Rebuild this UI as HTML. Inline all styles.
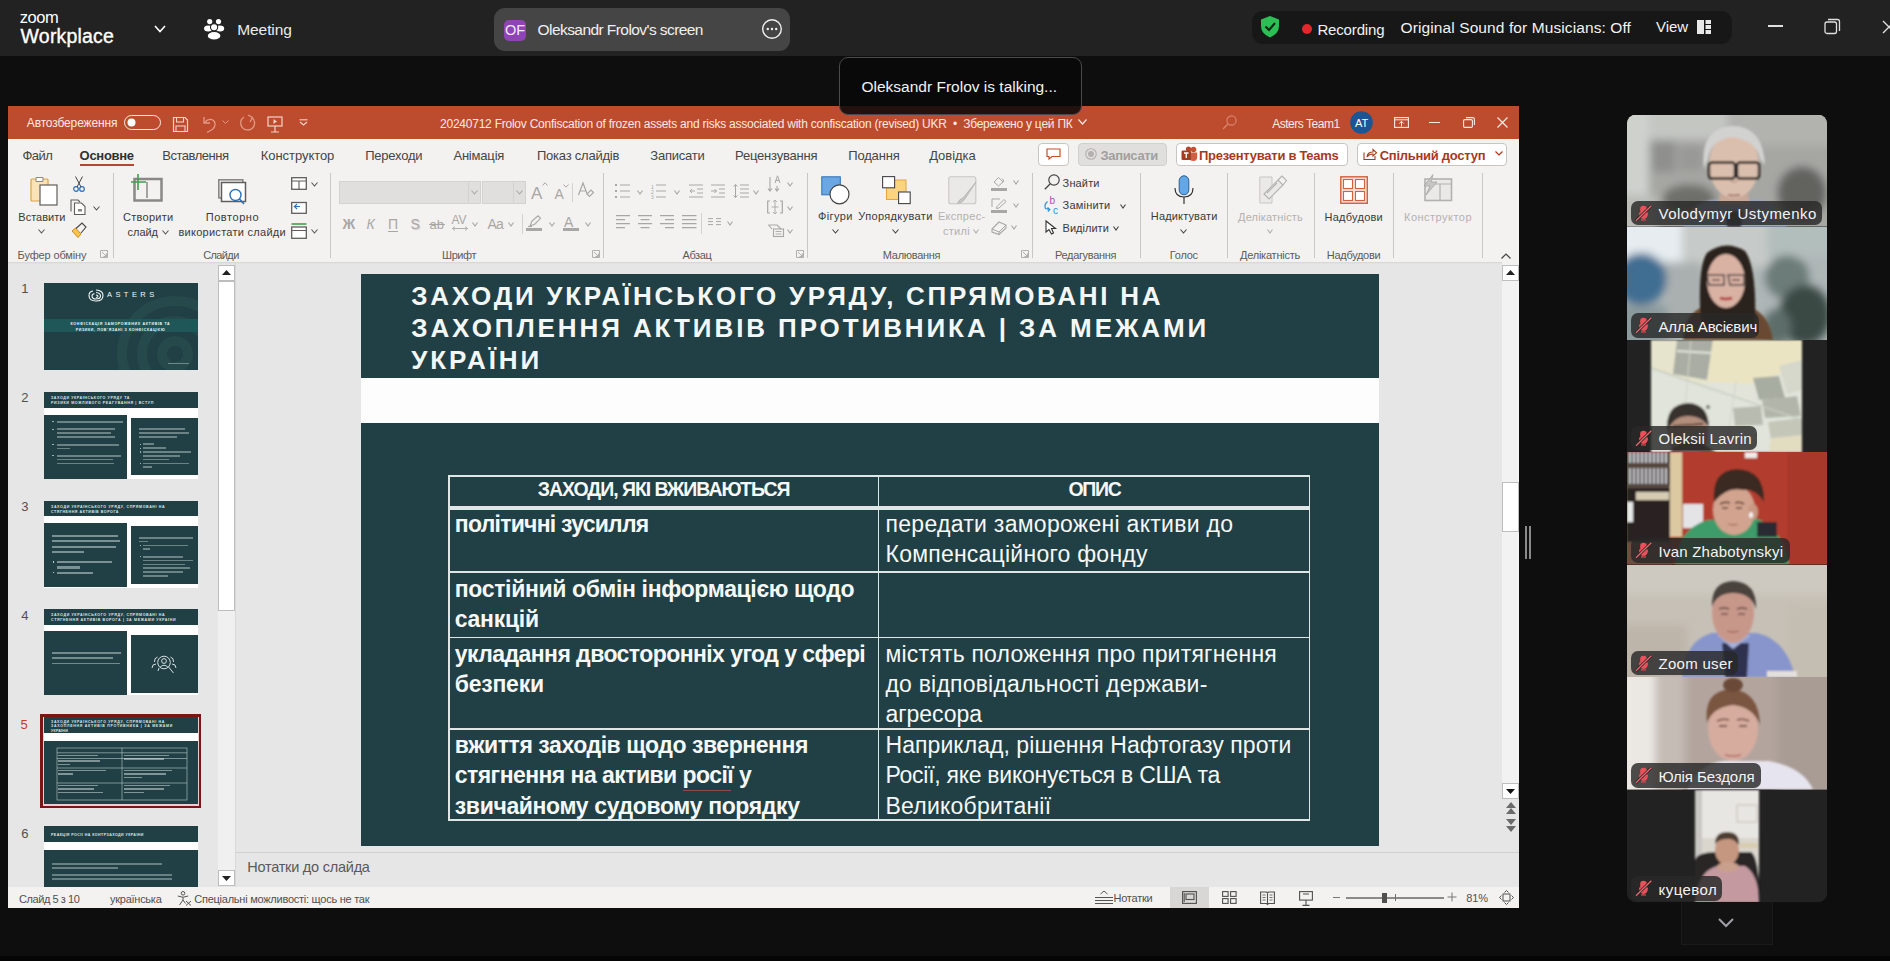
<!DOCTYPE html>
<html><head><meta charset="utf-8">
<style>
*{margin:0;padding:0;box-sizing:border-box}
html,body{width:1890px;height:961px;overflow:hidden;background:#0e0e0e;font-family:"Liberation Sans",sans-serif}
.a{position:absolute}
.t{position:absolute;white-space:nowrap;line-height:normal}
svg{overflow:visible}
</style></head>
<body>

<div class="a" style="left:0px;top:0px;width:1890px;height:56px;background:#222222;"></div>
<div class="t" style="left:19.8px;top:7.6px;font-size:16.5px;color:#fff;letter-spacing:-0.462px;">zoom</div>
<div class="t" style="left:20.6px;top:25.2px;font-size:19.5px;color:#fff;letter-spacing:0.193px;-webkit-text-stroke:0.35px #fff;">Workplace</div>
<svg class="a" style="left:154px;top:25px;" width="12" height="8" viewBox="0 0 12 8"><polyline points="1,1 6,6.5 11,1" fill="none" stroke="#fff" stroke-width="1.6"/></svg>
<svg class="a" style="left:204px;top:18px;" width="21" height="22" viewBox="0 0 21 22"><circle cx="5.7" cy="3.6" r="2.6" fill="#fff"/><circle cx="14.5" cy="3.6" r="2.6" fill="#fff"/><ellipse cx="4.2" cy="10.5" rx="4.2" ry="3" fill="#fff"/><ellipse cx="16" cy="10.5" rx="4.2" ry="3" fill="#fff"/><circle cx="10.1" cy="9.3" r="3.6" fill="#fff" stroke="#222" stroke-width="1.1"/><ellipse cx="10.1" cy="17.8" rx="6.9" ry="4.3" fill="#fff" stroke="#222" stroke-width="1.1"/></svg>
<div class="t" style="left:237.3px;top:20.8px;font-size:15.5px;color:#ececec;letter-spacing:-0.106px;">Meeting</div>
<div class="a" style="left:494px;top:8px;width:296px;height:43px;background:#454545;border-radius:11px;"></div>
<div class="a" style="left:504px;top:19.5px;width:22px;height:21px;background:#8f44b5;border-radius:5px;"></div>
<div class="t" style="left:504.9px;top:22.4px;font-size:14.5px;color:#f4e8fa;">OF</div>
<div class="t" style="left:537.6px;top:20.7px;font-size:15.5px;color:#f0f0f0;letter-spacing:-0.570px;">Oleksandr Frolov&#39;s screen</div>
<svg class="a" style="left:762px;top:19px;" width="20" height="20" viewBox="0 0 20 20"><circle cx="10" cy="10" r="9.3" fill="none" stroke="#f0f0f0" stroke-width="1.4"/><circle cx="5.8" cy="10" r="1.2" fill="#f0f0f0"/><circle cx="10" cy="10" r="1.2" fill="#f0f0f0"/><circle cx="14.2" cy="10" r="1.2" fill="#f0f0f0"/></svg>
<div class="a" style="left:1252px;top:11px;width:480px;height:33px;background:#171717;border-radius:11px;"></div>
<svg class="a" style="left:1259px;top:15px;" width="22" height="23" viewBox="0 0 22 23"><path d="M11,1 L20,4.5 L20,11 Q20,18.5 11,22.5 Q2,18.5 2,11 L2,4.5 Z" fill="#2bbf56"/><polyline points="6.5,11.5 10,15 16,8" fill="none" stroke="#0d2a14" stroke-width="2.2"/></svg>
<svg class="a" style="left:1302px;top:24px;" width="10" height="10" viewBox="0 0 10 10"><circle cx="5" cy="5" r="5" fill="#e3272b"/></svg>
<div class="t" style="left:1317.4px;top:20.8px;font-size:15px;color:#f2f2f2;letter-spacing:-0.153px;">Recording</div>
<div class="t" style="left:1400.6px;top:18.7px;font-size:15.5px;color:#f2f2f2;letter-spacing:0.098px;">Original Sound for Musicians: Off</div>
<div class="t" style="left:1656.0px;top:18.0px;font-size:15px;color:#f2f2f2;letter-spacing:-0.061px;">View</div>
<svg class="a" style="left:1697px;top:20px;" width="14" height="14" viewBox="0 0 14 14"><rect x="0" y="0" width="7" height="14" fill="#e8e8e8"/><rect x="8.5" y="0" width="5.5" height="4" fill="#e8e8e8"/><rect x="8.5" y="5" width="5.5" height="4" fill="#e8e8e8"/><rect x="8.5" y="10" width="5.5" height="4" fill="#e8e8e8"/></svg>
<div class="a" style="left:1768px;top:25px;width:15px;height:1.5px;background:#e0e0e0;"></div>
<svg class="a" style="left:1824px;top:18px;" width="17" height="17" viewBox="0 0 17 17"><rect x="1" y="4" width="11.5" height="11.5" rx="2" fill="none" stroke="#e0e0e0" stroke-width="1.3"/><path d="M4,1.5 L13.5,1.5 Q15.5,1.5 15.5,3.5 L15.5,13" fill="none" stroke="#e0e0e0" stroke-width="1.3"/></svg>
<svg class="a" style="left:1882px;top:20px;" width="12" height="14" viewBox="0 0 12 14"><path d="M1,1 L13,13 M13,1 L1,13" stroke="#e0e0e0" stroke-width="1.4"/></svg>
<div class="a" style="left:8px;top:106px;width:1511px;height:802px;background:#f3f2f1;"></div>
<div class="a" style="left:8px;top:106px;width:1511px;height:33px;background:#bd4b2d;"></div>
<div class="t" style="left:26.8px;top:116.1px;font-size:12px;color:#fbe9e3;letter-spacing:-0.140px;">Автозбереження</div>
<div class="a" style="left:123.5px;top:114.5px;width:37px;height:15.5px;background:transparent;border:1.3px solid #fbe9e3;border-radius:8px;"></div>
<svg class="a" style="left:127px;top:118px;" width="9" height="9" viewBox="0 0 9 9"><circle cx="4.5" cy="4.5" r="4" fill="#fff"/></svg>
<svg class="a" style="left:172px;top:115.5px;" width="17" height="17" viewBox="0 0 17 17"><path d="M1.5,1.5 H13 L15.5,4 V15.5 H1.5 Z" fill="none" stroke="#f3d2c8" stroke-width="1.2"/><rect x="4.5" y="1.5" width="7" height="4.5" fill="none" stroke="#f3d2c8" stroke-width="1.1"/><rect x="4" y="10" width="9" height="5.5" fill="none" stroke="#f3d2c8" stroke-width="1.1"/></svg>
<svg class="a" style="left:201px;top:115px;" width="16" height="18" viewBox="0 0 16 18"><path d="M3,2 V8 H9" fill="none" stroke="#e29a86" stroke-width="1.3"/><path d="M3.5,7.5 Q8,2.5 12.5,5.5 Q16,9 12,14 L6,17.5" fill="none" stroke="#e29a86" stroke-width="1.3"/></svg>
<svg class="a" style="left:222px;top:120px;" width="7" height="5" viewBox="0 0 7 5"><polyline points="0.5,0.5 3.5,3.5 6.5,0.5" fill="none" stroke="#e29a86" stroke-width="1"/></svg>
<svg class="a" style="left:239px;top:114px;" width="17" height="18" viewBox="0 0 17 18"><path d="M13,3.5 A7,7 0 1 1 5,3" fill="none" stroke="#e29a86" stroke-width="1.3"/><path d="M9,1 L13.5,3.5 L11,8" fill="none" stroke="#e29a86" stroke-width="1.3"/></svg>
<svg class="a" style="left:267px;top:115.5px;" width="16" height="17" viewBox="0 0 16 17"><rect x="1" y="1" width="14" height="9" fill="none" stroke="#f3d2c8" stroke-width="1.2"/><path d="M6.5,3 L10,5.5 L6.5,8 Z" fill="#f3d2c8"/><path d="M8,10 V15.5 M4,16 H12" stroke="#f3d2c8" stroke-width="1.2"/></svg>
<svg class="a" style="left:299px;top:119px;" width="9" height="7" viewBox="0 0 9 7"><path d="M0.5,0.8 H8.5" stroke="#f3d2c8" stroke-width="1.1"/><polyline points="1,3 4.5,6 8,3" fill="none" stroke="#f3d2c8" stroke-width="1.2"/></svg>
<div class="t" style="left:440.0px;top:116.9px;font-size:12px;color:#fbe9e3;letter-spacing:-0.233px;">20240712 Frolov Confiscation of frozen assets and risks associated with confiscation (revised) UKR&nbsp;&nbsp;•&nbsp;&nbsp;Збережено у цей ПК</div>
<svg class="a" style="left:1077.5px;top:119px;" width="9" height="6" viewBox="0 0 9 6"><polyline points="0.5,0.5 4.5,5 8.5,0.5" fill="none" stroke="#fbe9e3" stroke-width="1.2"/></svg>
<svg class="a" style="left:1222px;top:115px;" width="15" height="15" viewBox="0 0 15 15"><circle cx="9.5" cy="5.5" r="4.6" fill="none" stroke="#d8836c" stroke-width="1.2"/><path d="M6.2,8.8 L1,14" stroke="#d8836c" stroke-width="1.3"/></svg>
<div class="t" style="left:1272.2px;top:116.8px;font-size:12px;color:#fbe9e3;letter-spacing:-0.470px;">Asters Team1</div>
<svg class="a" style="left:1350px;top:111px;" width="23" height="23" viewBox="0 0 23 23"><circle cx="11.5" cy="11.5" r="11.3" fill="#1b5594"/></svg>
<div class="t" style="left:1355.0px;top:117.0px;font-size:11px;color:#fff;">AT</div>
<svg class="a" style="left:1394px;top:117px;" width="15" height="11" viewBox="0 0 15 11"><rect x="0.6" y="0.6" width="13.8" height="9.8" fill="none" stroke="#fbe9e3" stroke-width="1.1"/><path d="M0.6,2.8 H14.4" stroke="#fbe9e3" stroke-width="1"/><path d="M7.5,9.5 V4.5 M5.2,6.6 L7.5,4.3 L9.8,6.6" fill="none" stroke="#fbe9e3" stroke-width="1"/></svg>
<div class="a" style="left:1429px;top:121.5px;width:11px;height:1.3px;background:#fbe9e3;"></div>
<svg class="a" style="left:1463px;top:117px;" width="12" height="11" viewBox="0 0 12 11"><rect x="0.6" y="2.6" width="8.8" height="7.8" rx="1.2" fill="none" stroke="#fbe9e3" stroke-width="1.1"/><path d="M3,0.6 H9.8 Q11.4,0.6 11.4,2.2 V8" fill="none" stroke="#fbe9e3" stroke-width="1.1"/></svg>
<svg class="a" style="left:1496.5px;top:117px;" width="11" height="11" viewBox="0 0 11 11"><path d="M0.5,0.5 L10.5,10.5 M10.5,0.5 L0.5,10.5" stroke="#fbe9e3" stroke-width="1.2"/></svg>
<div class="t" style="left:22.5px;top:148.3px;font-size:13px;color:#454545;letter-spacing:-0.565px;">Файл</div>
<div class="t" style="left:79.6px;top:148.3px;font-size:13px;color:#303030;font-weight:700;letter-spacing:-0.287px;">Основне</div>
<div class="t" style="left:162.2px;top:148.3px;font-size:13px;color:#454545;letter-spacing:-0.463px;">Вставлення</div>
<div class="t" style="left:260.8px;top:148.3px;font-size:13px;color:#454545;letter-spacing:-0.057px;">Конструктор</div>
<div class="t" style="left:365.2px;top:148.3px;font-size:13px;color:#454545;letter-spacing:-0.224px;">Переходи</div>
<div class="t" style="left:453.4px;top:148.3px;font-size:13px;color:#454545;letter-spacing:-0.185px;">Анімація</div>
<div class="t" style="left:537.0px;top:148.3px;font-size:13px;color:#454545;letter-spacing:-0.228px;">Показ слайдів</div>
<div class="t" style="left:650.3px;top:148.3px;font-size:13px;color:#454545;letter-spacing:-0.243px;">Записати</div>
<div class="t" style="left:735.0px;top:148.3px;font-size:13px;color:#454545;letter-spacing:-0.195px;">Рецензування</div>
<div class="t" style="left:848.3px;top:148.3px;font-size:13px;color:#454545;letter-spacing:-0.186px;">Подання</div>
<div class="t" style="left:929.2px;top:148.3px;font-size:13px;color:#454545;letter-spacing:-0.038px;">Довідка</div>
<div class="a" style="left:79.6px;top:163.8px;width:54.3px;height:2.6px;background:#b7472a;"></div>
<div class="a" style="left:1038px;top:142.5px;width:31px;height:23px;background:#fff;border:1px solid #c8c6c4;border-radius:4px;"></div>
<svg class="a" style="left:1046px;top:148px;" width="15" height="12" viewBox="0 0 15 12"><path d="M1,1 H14 V8.5 H6 L3,11 V8.5 H1 Z" fill="none" stroke="#c4502f" stroke-width="1.2"/></svg>
<div class="a" style="left:1077.5px;top:142.5px;width:89px;height:23px;background:#e1dfdd;border:1px solid #d2d0ce;border-radius:4px;"></div>
<svg class="a" style="left:1085px;top:148px;" width="12" height="12" viewBox="0 0 12 12"><circle cx="6" cy="6" r="5.3" fill="none" stroke="#b3b0ad" stroke-width="1.1"/><circle cx="6" cy="6" r="3" fill="#b3b0ad"/></svg>
<div class="t" style="left:1100.5px;top:147.7px;font-size:13px;color:#a19f9d;font-weight:700;letter-spacing:-0.337px;">Записати</div>
<div class="a" style="left:1175.5px;top:142.5px;width:172px;height:23px;background:#fff;border:1px solid #c8c6c4;border-radius:4px;"></div>
<svg class="a" style="left:1181px;top:146px;" width="17" height="16" viewBox="0 0 17 16"><circle cx="12.5" cy="3.5" r="2.8" fill="#c4502f"/><path d="M8,6.5 H16.2 V11 Q16.2,15 12.5,15 Q8,15 8,11 Z" fill="#d0603e"/><circle cx="7.5" cy="3" r="2.6" fill="#b8462a"/><rect x="0.5" y="4.5" width="9.5" height="9.5" rx="1.2" fill="#a83c22"/><path d="M3,7 H7.5 M5.25,7 V12" stroke="#fff" stroke-width="1.3"/></svg>
<div class="t" style="left:1199.0px;top:147.7px;font-size:13px;color:#a8391f;font-weight:700;letter-spacing:-0.258px;">Презентувати в Teams</div>
<div class="a" style="left:1356.5px;top:142.5px;width:150px;height:23px;background:#fff;border:1px solid #c8c6c4;border-radius:4px;"></div>
<svg class="a" style="left:1363px;top:148px;" width="14" height="12" viewBox="0 0 14 12"><path d="M1,4.5 V11.5 H12 V8" fill="none" stroke="#a8391f" stroke-width="1.1"/><path d="M4,9 Q4.5,4 10,4 V1.5 L13.5,4.8 L10,8 V6 Q6,6 4,9 Z" fill="none" stroke="#a8391f" stroke-width="1.1"/></svg>
<div class="t" style="left:1379.7px;top:147.7px;font-size:13px;color:#a8391f;font-weight:700;letter-spacing:-0.265px;">Спільний доступ</div>
<svg class="a" style="left:1495px;top:151px;" width="8" height="5" viewBox="0 0 8 5"><polyline points="0.5,0.5 4,4 7.5,0.5" fill="none" stroke="#a8391f" stroke-width="1.2"/></svg>
<svg class="a" style="left:30px;top:175px;" width="28" height="31" viewBox="0 0 28 31"><rect x="1" y="4" width="17" height="22" rx="1" fill="#fbe3b8" stroke="#e2a23c" stroke-width="1.2"/><path d="M6,2.5 H13 V6.5 H6 Z" fill="#fff" stroke="#8a8886" stroke-width="1"/><rect x="10" y="10" width="17" height="20" fill="#fff" stroke="#605e5c" stroke-width="1.2"/></svg>
<div class="t" style="left:18.3px;top:210.5px;font-size:11px;color:#3b3a39;">Вставити</div>
<svg class="a" style="left:38.0px;top:228.8px;" width="7" height="5" viewBox="0 0 7 5"><polyline points="0.5,0.5 3.5,4 6.5,0.5" fill="none" stroke="#555" stroke-width="1.1"/></svg>
<svg class="a" style="left:73px;top:176px;" width="12" height="16" viewBox="0 0 12 16"><circle cx="3" cy="13" r="2.3" fill="none" stroke="#2f6fb5" stroke-width="1.2"/><circle cx="9" cy="13" r="2.3" fill="none" stroke="#2f6fb5" stroke-width="1.2"/><path d="M4,11 L9.5,0.5 M8,11 L2.5,0.5" stroke="#444" stroke-width="1"/></svg>
<svg class="a" style="left:70px;top:199px;" width="17" height="16" viewBox="0 0 17 16"><path d="M1,12.5 V1 H8 L10,3" fill="none" stroke="#605e5c" stroke-width="1.1"/><path d="M4.5,4 H11.5 L15,7.5 V15.5 H4.5 Z" fill="#fff" stroke="#605e5c" stroke-width="1.1"/><rect x="8" y="10" width="4" height="2.5" fill="#8a8886"/></svg>
<svg class="a" style="left:92.5px;top:205.8px;" width="7" height="5" viewBox="0 0 7 5"><polyline points="0.5,0.5 3.5,4 6.5,0.5" fill="none" stroke="#555" stroke-width="1.1"/></svg>
<svg class="a" style="left:70px;top:222px;" width="17" height="16" viewBox="0 0 17 16"><path d="M2,9 L8,15.5 L11,12 L5.5,6 Z" fill="#f6c44a" stroke="#d48a1a" stroke-width="1"/><path d="M6,6.5 L12,1 L16,5 L11,11" fill="none" stroke="#444" stroke-width="1.1"/></svg>
<svg class="a" style="left:100px;top:250px;" width="8" height="8" viewBox="0 0 8 8"><path d="M0.5,0.5 H7.5 V7.5 H0.5 Z" fill="none" stroke="#aaa8a6" stroke-width="0.9"/><path d="M2,2 L6.5,6.5 M6.5,3.5 V6.5 H3.5" fill="none" stroke="#aaa8a6" stroke-width="0.9"/></svg>
<div class="t" style="left:17.6px;top:249.0px;font-size:11px;color:#5c5b5a;letter-spacing:-0.138px;">Буфер обміну</div>
<div class="a" style="left:112.5px;top:173px;width:1px;height:85px;background:#c9c7c5;"></div>
<svg class="a" style="left:131px;top:174px;" width="32" height="28" viewBox="0 0 32 28"><rect x="3.5" y="5" width="27" height="21.5" fill="none" stroke="#8a8886" stroke-width="2.5"/><path d="M16,8 V24" stroke="#8a8886" stroke-width="1.5"/><path d="M7,0 V16 M0,8 H15" stroke="#3fa04b" stroke-width="1.6"/></svg>
<div class="t" style="left:123.0px;top:210.5px;font-size:11px;color:#3b3a39;letter-spacing:0.279px;">Створити</div>
<div class="t" style="left:127.5px;top:226.2px;font-size:11px;color:#3b3a39;letter-spacing:-0.020px;">слайд</div>
<svg class="a" style="left:162.0px;top:229.8px;" width="7" height="5" viewBox="0 0 7 5"><polyline points="0.5,0.5 3.5,4 6.5,0.5" fill="none" stroke="#555" stroke-width="1.1"/></svg>
<svg class="a" style="left:218px;top:179px;" width="32" height="28" viewBox="0 0 32 28"><rect x="0.8" y="0.8" width="24" height="18" fill="none" stroke="#8a8886" stroke-width="1.6"/><rect x="3.5" y="3.5" width="24" height="19" fill="#fff" stroke="#605e5c" stroke-width="1.5"/><circle cx="17.5" cy="16" r="5.5" fill="#fff" stroke="#2f6fb5" stroke-width="1.4"/><path d="M21.5,20 L26,25" stroke="#2f6fb5" stroke-width="1.6"/></svg>
<div class="t" style="left:205.7px;top:210.5px;font-size:11px;color:#3b3a39;letter-spacing:0.566px;">Повторно</div>
<div class="t" style="left:178.4px;top:226.2px;font-size:11px;color:#3b3a39;letter-spacing:0.279px;">використати слайди</div>
<svg class="a" style="left:290.5px;top:177px;" width="16" height="13" viewBox="0 0 16 13"><rect x="0.7" y="0.7" width="14.6" height="11.6" fill="#fff" stroke="#605e5c" stroke-width="1.3"/><path d="M0.7,4 H15.3 M8,4 V12.3" stroke="#605e5c" stroke-width="1.1"/></svg>
<svg class="a" style="left:310.5px;top:181.8px;" width="7" height="5" viewBox="0 0 7 5"><polyline points="0.5,0.5 3.5,4 6.5,0.5" fill="none" stroke="#555" stroke-width="1.1"/></svg>
<svg class="a" style="left:290.5px;top:199.5px;" width="16" height="14" viewBox="0 0 16 14"><rect x="0.7" y="2.5" width="14.6" height="10.8" fill="#fff" stroke="#605e5c" stroke-width="1.3"/><path d="M9,6.5 H3.5 L6,4 M3.5,6.5 L6,9" fill="none" stroke="#2f6fb5" stroke-width="1.1"/></svg>
<svg class="a" style="left:290.5px;top:223px;" width="16" height="16" viewBox="0 0 16 16"><path d="M0.5,1 H15.5" stroke="#3fa04b" stroke-width="1.6"/><rect x="0.7" y="4" width="14.6" height="11.3" fill="#fff" stroke="#605e5c" stroke-width="1.3"/><path d="M0.7,7.5 H15.3" stroke="#605e5c" stroke-width="1"/></svg>
<svg class="a" style="left:310.5px;top:228.8px;" width="7" height="5" viewBox="0 0 7 5"><polyline points="0.5,0.5 3.5,4 6.5,0.5" fill="none" stroke="#555" stroke-width="1.1"/></svg>
<div class="t" style="left:203.2px;top:249.0px;font-size:11px;color:#5c5b5a;letter-spacing:-0.615px;">Слайди</div>
<div class="a" style="left:330.3px;top:173px;width:1px;height:85px;background:#c9c7c5;"></div>
<div class="a" style="left:339px;top:181px;width:141.5px;height:23px;background:#e1dfdd;border:1px solid #d4d2d0;"></div>
<div class="a" style="left:468.2px;top:181px;width:1px;height:23px;background:#d4d2d0;"></div>
<svg class="a" style="left:470.7px;top:189.8px;" width="7" height="5" viewBox="0 0 7 5"><polyline points="0.5,0.5 3.5,4 6.5,0.5" fill="none" stroke="#a9a7a5" stroke-width="1.1"/></svg>
<div class="a" style="left:482px;top:181px;width:44px;height:23px;background:#e1dfdd;border:1px solid #d4d2d0;"></div>
<div class="a" style="left:513.2px;top:181px;width:1px;height:23px;background:#d4d2d0;"></div>
<svg class="a" style="left:516.0px;top:189.8px;" width="7" height="5" viewBox="0 0 7 5"><polyline points="0.5,0.5 3.5,4 6.5,0.5" fill="none" stroke="#a9a7a5" stroke-width="1.1"/></svg>
<div class="t" style="left:531.0px;top:183.6px;font-size:17px;color:#a9a7a5;">A</div>
<svg class="a" style="left:542px;top:182px;" width="6" height="4" viewBox="0 0 6 4"><polyline points="0.5,3.5 3,0.8 5.5,3.5" fill="none" stroke="#a9a7a5" stroke-width="1"/></svg>
<div class="t" style="left:554.5px;top:185.8px;font-size:14px;color:#a9a7a5;">A</div>
<svg class="a" style="left:563px;top:184px;" width="6" height="4" viewBox="0 0 6 4"><polyline points="0.5,0.5 3,3.2 5.5,0.5" fill="none" stroke="#a9a7a5" stroke-width="1"/></svg>
<div class="a" style="left:572.4px;top:183px;width:1px;height:19px;background:#d4d2d0;"></div>
<svg class="a" style="left:578px;top:182px;" width="16" height="16" viewBox="0 0 16 16"><path d="M0.5,13 L5,1 L9.5,13 M2,9 H8" fill="none" stroke="#a9a7a5" stroke-width="1.2"/><path d="M9,12 L13,8 L15.5,10.5 L11.5,14.5 Z" fill="none" stroke="#a9a7a5" stroke-width="1.1"/></svg>
<div class="t" style="left:342.5px;top:215.8px;font-size:14px;color:#a9a7a5;font-weight:700;">Ж</div>
<div class="t" style="left:366.5px;top:215.8px;font-size:14px;color:#a9a7a5;font-style:italic;">К</div>
<div class="t" style="left:388.0px;top:215.8px;font-size:14px;color:#a9a7a5;">П</div>
<div class="a" style="left:388px;top:231px;width:10px;height:1.2px;background:#a9a7a5;"></div>
<div class="t" style="left:410.5px;top:215.8px;font-size:14px;color:#a9a7a5;text-shadow:1px 1px 1px #d0cecc;">S</div>
<div class="t" style="left:429.5px;top:216.7px;font-size:13px;color:#a9a7a5;">ab</div>
<div class="a" style="left:429px;top:223.5px;width:16px;height:1.2px;background:#a9a7a5;"></div>
<div class="t" style="left:451.5px;top:212.6px;font-size:12px;color:#a9a7a5;">AV</div>
<svg class="a" style="left:452px;top:226px;" width="16" height="5" viewBox="0 0 16 5"><path d="M0.5,2.5 H15.5 M3,0.5 L0.5,2.5 L3,4.5 M13,0.5 L15.5,2.5 L13,4.5" fill="none" stroke="#a9a7a5" stroke-width="0.9"/></svg>
<svg class="a" style="left:471.8px;top:221.8px;" width="6" height="5" viewBox="0 0 6 5"><polyline points="0.5,0.5 3.0,4 5.5,0.5" fill="none" stroke="#a9a7a5" stroke-width="1.1"/></svg>
<div class="t" style="left:487.5px;top:215.8px;font-size:14px;color:#a9a7a5;letter-spacing:-0.812px;">Aa</div>
<svg class="a" style="left:507.5px;top:221.8px;" width="6" height="5" viewBox="0 0 6 5"><polyline points="0.5,0.5 3.0,4 5.5,0.5" fill="none" stroke="#a9a7a5" stroke-width="1.1"/></svg>
<div class="a" style="left:521.6px;top:214px;width:1px;height:20px;background:#d4d2d0;"></div>
<svg class="a" style="left:526px;top:215px;" width="16" height="14" viewBox="0 0 16 14"><path d="M4,11 L6,6 L12,0.8 L14.5,3.3 L9,9 Z M2,11.5 H6" fill="none" stroke="#a9a7a5" stroke-width="1.1"/></svg>
<div class="a" style="left:526px;top:228px;width:16px;height:3px;background:#a9a7a5;"></div>
<svg class="a" style="left:548.7px;top:221.8px;" width="6" height="5" viewBox="0 0 6 5"><polyline points="0.5,0.5 3.0,4 5.5,0.5" fill="none" stroke="#a9a7a5" stroke-width="1.1"/></svg>
<div class="t" style="left:564.0px;top:213.8px;font-size:14px;color:#a9a7a5;">A</div>
<div class="a" style="left:563px;top:228px;width:16px;height:3px;background:#a9a7a5;"></div>
<svg class="a" style="left:585.0px;top:221.8px;" width="6" height="5" viewBox="0 0 6 5"><polyline points="0.5,0.5 3.0,4 5.5,0.5" fill="none" stroke="#a9a7a5" stroke-width="1.1"/></svg>
<svg class="a" style="left:592px;top:250px;" width="8" height="8" viewBox="0 0 8 8"><path d="M0.5,0.5 H7.5 V7.5 H0.5 Z" fill="none" stroke="#aaa8a6" stroke-width="0.9"/><path d="M2,2 L6.5,6.5 M6.5,3.5 V6.5 H3.5" fill="none" stroke="#aaa8a6" stroke-width="0.9"/></svg>
<div class="t" style="left:442.0px;top:249.0px;font-size:11px;color:#5c5b5a;letter-spacing:-0.438px;">Шрифт</div>
<div class="a" style="left:603.3px;top:173px;width:1px;height:85px;background:#c9c7c5;"></div>
<svg class="a" style="left:614.5px;top:184px;" width="16" height="14" viewBox="0 0 16 14"><rect x="0" y="0" width="2" height="2" fill="#a9a7a5"/><rect x="0" y="6" width="2" height="2" fill="#a9a7a5"/><rect x="0" y="12" width="2" height="2" fill="#a9a7a5"/><path d="M5,1 H15 M5,7 H15 M5,13 H15" stroke="#a9a7a5" stroke-width="1.2"/></svg>
<svg class="a" style="left:637.0px;top:189.8px;" width="6" height="5" viewBox="0 0 6 5"><polyline points="0.5,0.5 3.0,4 5.5,0.5" fill="none" stroke="#a9a7a5" stroke-width="1.1"/></svg>
<svg class="a" style="left:651px;top:184px;" width="16" height="15" viewBox="0 0 16 15"><text x="0" y="4.5" font-size="5" fill="#a9a7a5" font-family="Liberation Sans">1</text><text x="0" y="9.5" font-size="5" fill="#a9a7a5" font-family="Liberation Sans">2</text><text x="0" y="14.5" font-size="5" fill="#a9a7a5" font-family="Liberation Sans">3</text><path d="M5,1 H15 M5,7 H15 M5,13 H15" stroke="#a9a7a5" stroke-width="1.2"/></svg>
<svg class="a" style="left:674.0px;top:189.8px;" width="6" height="5" viewBox="0 0 6 5"><polyline points="0.5,0.5 3.0,4 5.5,0.5" fill="none" stroke="#a9a7a5" stroke-width="1.1"/></svg>
<svg class="a" style="left:689px;top:184px;" width="15" height="14" viewBox="0 0 15 14"><path d="M0,1 H14 M8,5 H14 M8,9 H14 M0,13 H14" stroke="#a9a7a5" stroke-width="1.2"/><path d="M6,7 H1 M3,5 L1,7 L3,9" fill="none" stroke="#a9a7a5" stroke-width="1"/></svg>
<svg class="a" style="left:711px;top:184px;" width="15" height="14" viewBox="0 0 15 14"><path d="M0,1 H14 M8,5 H14 M8,9 H14 M0,13 H14" stroke="#a9a7a5" stroke-width="1.2"/><path d="M0,7 H5.5 M3.5,5 L5.5,7 L3.5,9" fill="none" stroke="#a9a7a5" stroke-width="1"/></svg>
<svg class="a" style="left:732.5px;top:184px;" width="17" height="14" viewBox="0 0 17 14"><path d="M7,1 H16 M7,5 H16 M7,9 H16 M7,13 H16" stroke="#a9a7a5" stroke-width="1.2"/><path d="M2.5,0.5 V13.5 M0.5,2.5 L2.5,0.5 L4.5,2.5 M0.5,11.5 L2.5,13.5 L4.5,11.5" fill="none" stroke="#a9a7a5" stroke-width="1"/></svg>
<svg class="a" style="left:753.0px;top:189.8px;" width="6" height="5" viewBox="0 0 6 5"><polyline points="0.5,0.5 3.0,4 5.5,0.5" fill="none" stroke="#a9a7a5" stroke-width="1.1"/></svg>
<svg class="a" style="left:768px;top:175px;" width="15" height="18" viewBox="0 0 15 18"><path d="M2,2 V16 M0,13.5 L2,16 L4,13.5 M9,11 V16 M7,13.5 L9,16 L11,13.5" fill="none" stroke="#a9a7a5" stroke-width="1.1"/><path d="M7,8 L9.5,0.8 L12,8 M7.8,5.5 H11.2" fill="none" stroke="#a9a7a5" stroke-width="1"/></svg>
<svg class="a" style="left:787.3px;top:181.8px;" width="6" height="5" viewBox="0 0 6 5"><polyline points="0.5,0.5 3.0,4 5.5,0.5" fill="none" stroke="#a9a7a5" stroke-width="1.1"/></svg>
<svg class="a" style="left:767px;top:200px;" width="16" height="15" viewBox="0 0 16 15"><path d="M3,1 H0.7 V13 H3 M13,1 H15.3 V13 H13" fill="none" stroke="#a9a7a5" stroke-width="1.2"/><path d="M8,0 V14 M6,2 L8,0 L10,2 M6,12 L8,14 L10,12 M4.5,7 H11.5" fill="none" stroke="#a9a7a5" stroke-width="0.9"/></svg>
<svg class="a" style="left:787.3px;top:205.8px;" width="6" height="5" viewBox="0 0 6 5"><polyline points="0.5,0.5 3.0,4 5.5,0.5" fill="none" stroke="#a9a7a5" stroke-width="1.1"/></svg>
<svg class="a" style="left:767.5px;top:224px;" width="16" height="13" viewBox="0 0 16 13"><path d="M0.5,1 H9 L13,5" fill="none" stroke="#a9a7a5" stroke-width="1.1"/><path d="M0.5,1 L4,5" stroke="#a9a7a5" stroke-width="1.1"/><rect x="5.5" y="5" width="10" height="7.5" fill="none" stroke="#a9a7a5" stroke-width="1.1"/><path d="M7.5,7.5 H13.5 M7.5,10 H13.5" stroke="#a9a7a5" stroke-width="0.9"/></svg>
<svg class="a" style="left:787.3px;top:228.8px;" width="6" height="5" viewBox="0 0 6 5"><polyline points="0.5,0.5 3.0,4 5.5,0.5" fill="none" stroke="#a9a7a5" stroke-width="1.1"/></svg>
<svg class="a" style="left:615.5px;top:215px;" width="14" height="13" viewBox="0 0 14 13"><path d="M0,0.6 H14 M0,4.6 H9 M0,8.6 H14 M0,12.6 H9" stroke="#a9a7a5" stroke-width="1.2"/></svg>
<svg class="a" style="left:637.8px;top:215px;" width="14" height="13" viewBox="0 0 14 13"><path d="M0,0.6 H14 M2.5,4.6 H11.5 M0,8.6 H14 M2.5,12.6 H11.5" stroke="#a9a7a5" stroke-width="1.2"/></svg>
<svg class="a" style="left:660px;top:215px;" width="14" height="13" viewBox="0 0 14 13"><path d="M0,0.6 H14 M5,4.6 H14 M0,8.6 H14 M5,12.6 H14" stroke="#a9a7a5" stroke-width="1.2"/></svg>
<svg class="a" style="left:681.5px;top:215px;" width="14.5" height="13" viewBox="0 0 14.5 13"><path d="M0,0.6 H14.5 M0,4.6 H14.5 M0,8.6 H14.5 M0,12.6 H14.5" stroke="#a9a7a5" stroke-width="1.2"/></svg>
<div class="a" style="left:701.3px;top:213px;width:1px;height:21px;background:#d4d2d0;"></div>
<svg class="a" style="left:708px;top:218px;" width="13" height="8" viewBox="0 0 13 8"><path d="M0,0.6 H5 M8,0.6 H13 M0,3.6 H5 M8,3.6 H13 M0,6.6 H5 M8,6.6 H13" stroke="#a9a7a5" stroke-width="1"/></svg>
<svg class="a" style="left:726.8px;top:220.8px;" width="6" height="5" viewBox="0 0 6 5"><polyline points="0.5,0.5 3.0,4 5.5,0.5" fill="none" stroke="#a9a7a5" stroke-width="1.1"/></svg>
<svg class="a" style="left:795.6px;top:250px;" width="8" height="8" viewBox="0 0 8 8"><path d="M0.5,0.5 H7.5 V7.5 H0.5 Z" fill="none" stroke="#aaa8a6" stroke-width="0.9"/><path d="M2,2 L6.5,6.5 M6.5,3.5 V6.5 H3.5" fill="none" stroke="#aaa8a6" stroke-width="0.9"/></svg>
<div class="t" style="left:682.4px;top:249.0px;font-size:11px;color:#5c5b5a;letter-spacing:-0.332px;">Абзац</div>
<div class="a" style="left:806.5px;top:173px;width:1px;height:85px;background:#c9c7c5;"></div>
<svg class="a" style="left:821px;top:176px;" width="32" height="34" viewBox="0 0 32 34"><rect x="0.8" y="0.8" width="18.5" height="18" fill="#6aa7e3" stroke="#2f6fb5" stroke-width="1"/><circle cx="18.5" cy="18.3" r="9.5" fill="#fff" stroke="#444" stroke-width="1.2"/></svg>
<div class="t" style="left:818.0px;top:210.0px;font-size:11px;color:#3b3a39;letter-spacing:0.374px;">Фігури</div>
<svg class="a" style="left:831.5px;top:228.8px;" width="7" height="5" viewBox="0 0 7 5"><polyline points="0.5,0.5 3.5,4 6.5,0.5" fill="none" stroke="#444" stroke-width="1.1"/></svg>
<svg class="a" style="left:881.5px;top:176px;" width="30" height="29" viewBox="0 0 30 29"><rect x="4.5" y="4" width="19.5" height="19.5" fill="#fcd37f" stroke="#e8a33b" stroke-width="1"/><rect x="0.6" y="0.6" width="12" height="11.2" fill="#fff" stroke="#444" stroke-width="1.1"/><rect x="16.6" y="16" width="11.6" height="11.6" fill="#fff" stroke="#444" stroke-width="1.1"/></svg>
<div class="t" style="left:858.3px;top:210.0px;font-size:11px;color:#3b3a39;letter-spacing:0.354px;">Упорядкувати</div>
<svg class="a" style="left:891.5px;top:228.8px;" width="7" height="5" viewBox="0 0 7 5"><polyline points="0.5,0.5 3.5,4 6.5,0.5" fill="none" stroke="#444" stroke-width="1.1"/></svg>
<svg class="a" style="left:947.5px;top:176px;" width="30" height="29" viewBox="0 0 30 29"><rect x="0.8" y="0.8" width="27" height="27" rx="2" fill="#ebe9e8" stroke="#c8c6c4" stroke-width="1.1"/><path d="M28,6 L15,22 Q11,23 9.5,27.5 Q14,27 16.5,23.5 Z" fill="#c8c6c4" stroke="#b3b1af" stroke-width="0.8"/></svg>
<div class="t" style="left:938.0px;top:210.0px;font-size:11px;color:#b3b1af;letter-spacing:0.284px;">Експрес-</div>
<div class="t" style="left:943.0px;top:225.4px;font-size:11px;color:#b3b1af;letter-spacing:0.291px;">стилі</div>
<svg class="a" style="left:973.0px;top:228.8px;" width="6" height="5" viewBox="0 0 6 5"><polyline points="0.5,0.5 3.0,4 5.5,0.5" fill="none" stroke="#b3b1af" stroke-width="1.1"/></svg>
<svg class="a" style="left:991px;top:176px;" width="16" height="15" viewBox="0 0 16 15"><path d="M3,6 L7.5,1.5 L12,6 L7.5,10 Z" fill="none" stroke="#a9a7a5" stroke-width="1"/><path d="M11,2.5 Q13,4 12.5,6" fill="none" stroke="#a9a7a5" stroke-width="1"/></svg>
<div class="a" style="left:991px;top:187.5px;width:15.5px;height:3px;background:#a9a7a5;"></div>
<svg class="a" style="left:1013.0px;top:180.3px;" width="6" height="5" viewBox="0 0 6 5"><polyline points="0.5,0.5 3.0,4 5.5,0.5" fill="none" stroke="#a9a7a5" stroke-width="1.1"/></svg>
<svg class="a" style="left:991px;top:198px;" width="16" height="13" viewBox="0 0 16 13"><path d="M1,9 V1 H9" fill="none" stroke="#a9a7a5" stroke-width="1"/><path d="M6,8.5 L13,1.5 L15,3.5 L8,10 L5.5,10.5 Z" fill="none" stroke="#a9a7a5" stroke-width="1"/></svg>
<div class="a" style="left:991px;top:209.5px;width:15.5px;height:3px;background:#a9a7a5;"></div>
<svg class="a" style="left:1013.0px;top:202.8px;" width="6" height="5" viewBox="0 0 6 5"><polyline points="0.5,0.5 3.0,4 5.5,0.5" fill="none" stroke="#a9a7a5" stroke-width="1.1"/></svg>
<svg class="a" style="left:991px;top:221px;" width="16" height="14" viewBox="0 0 16 14"><path d="M1,8 L8,1 L15,4 L15,7 L8,13.5 L1,11 Z" fill="none" stroke="#a9a7a5" stroke-width="1.1"/><path d="M1,8 L8,11 L15,4 M8,11 V13.5" fill="none" stroke="#a9a7a5" stroke-width="1"/></svg>
<svg class="a" style="left:1011.0px;top:225.3px;" width="6" height="5" viewBox="0 0 6 5"><polyline points="0.5,0.5 3.0,4 5.5,0.5" fill="none" stroke="#a9a7a5" stroke-width="1.1"/></svg>
<svg class="a" style="left:1021px;top:250px;" width="8" height="8" viewBox="0 0 8 8"><path d="M0.5,0.5 H7.5 V7.5 H0.5 Z" fill="none" stroke="#aaa8a6" stroke-width="0.9"/><path d="M2,2 L6.5,6.5 M6.5,3.5 V6.5 H3.5" fill="none" stroke="#aaa8a6" stroke-width="0.9"/></svg>
<div class="t" style="left:882.8px;top:249.0px;font-size:11px;color:#5c5b5a;letter-spacing:-0.280px;">Малювання</div>
<div class="a" style="left:1032.4px;top:173px;width:1px;height:85px;background:#c9c7c5;"></div>
<svg class="a" style="left:1044px;top:174px;" width="16" height="16" viewBox="0 0 16 16"><circle cx="10" cy="6" r="5.2" fill="none" stroke="#444" stroke-width="1.2"/><path d="M6.3,9.7 L0.8,15.2" stroke="#444" stroke-width="1.3"/></svg>
<div class="t" style="left:1062.6px;top:177.0px;font-size:11px;color:#3b3a39;letter-spacing:0.139px;">Знайти</div>
<svg class="a" style="left:1043px;top:196px;" width="17" height="18" viewBox="0 0 17 18"><text x="6.5" y="8" font-size="10" fill="#b146c2" font-family="Liberation Sans">b</text><text x="10" y="17.5" font-size="10" fill="#2f8fd8" font-family="Liberation Sans">c</text><path d="M4.5,5.5 Q0.8,8.5 2.5,12.5 L6.5,13.5 M4.5,11.5 L6.8,13.5 L4.8,15.5" fill="none" stroke="#2f8fd8" stroke-width="1.2"/></svg>
<div class="t" style="left:1062.6px;top:199.4px;font-size:11px;color:#3b3a39;letter-spacing:0.204px;">Замінити</div>
<svg class="a" style="left:1120.4px;top:204.3px;" width="6" height="5" viewBox="0 0 6 5"><polyline points="0.5,0.5 3.0,4 5.5,0.5" fill="none" stroke="#444" stroke-width="1.1"/></svg>
<svg class="a" style="left:1045px;top:220px;" width="12" height="15" viewBox="0 0 12 15"><path d="M1,1 L1,12 L4,9.5 L6.5,14 L8.5,13 L6.5,8.5 L10.5,8.5 Z" fill="#fff" stroke="#333" stroke-width="1.1"/></svg>
<div class="t" style="left:1062.6px;top:221.9px;font-size:11px;color:#3b3a39;letter-spacing:0.014px;">Виділити</div>
<svg class="a" style="left:1112.7px;top:226.3px;" width="6" height="5" viewBox="0 0 6 5"><polyline points="0.5,0.5 3.0,4 5.5,0.5" fill="none" stroke="#444" stroke-width="1.1"/></svg>
<div class="t" style="left:1055.0px;top:249.0px;font-size:11px;color:#5c5b5a;letter-spacing:-0.339px;">Редагування</div>
<div class="a" style="left:1139.5px;top:173px;width:1px;height:85px;background:#c9c7c5;"></div>
<svg class="a" style="left:1174px;top:175px;" width="20" height="30" viewBox="0 0 20 30"><rect x="5.2" y="0.8" width="9.6" height="19" rx="4.8" fill="#64a7e6" stroke="#2a5e95" stroke-width="1"/><path d="M1,13 Q1,22 10,22 Q19,22 19,13" fill="none" stroke="#333" stroke-width="1.2"/><path d="M10,22 V29" stroke="#333" stroke-width="1.2"/></svg>
<div class="t" style="left:1150.8px;top:210.0px;font-size:11px;color:#3b3a39;letter-spacing:0.154px;">Надиктувати</div>
<svg class="a" style="left:1179.5px;top:228.8px;" width="7" height="5" viewBox="0 0 7 5"><polyline points="0.5,0.5 3.5,4 6.5,0.5" fill="none" stroke="#444" stroke-width="1.1"/></svg>
<div class="t" style="left:1169.8px;top:249.0px;font-size:11px;color:#5c5b5a;letter-spacing:-0.251px;">Голос</div>
<div class="a" style="left:1227.3px;top:173px;width:1px;height:85px;background:#c9c7c5;"></div>
<svg class="a" style="left:1259px;top:174px;" width="28" height="30" viewBox="0 0 28 30"><path d="M0.8,3 H13 V29 H0.8 Z" fill="#ebe9e8" stroke="#c8c6c4" stroke-width="1"/><path d="M5,20 L19,6 L24,11 L10,25 Z" fill="#ebe9e8" stroke="#b3b1af" stroke-width="1.1"/><path d="M19,6 L23,2 L27.5,6.5 L24,11" fill="none" stroke="#b3b1af" stroke-width="1.1"/><path d="M8,19 L18,9" stroke="#b3b1af" stroke-width="1.1"/></svg>
<div class="t" style="left:1238.0px;top:210.5px;font-size:11px;color:#b3b1af;letter-spacing:0.181px;">Делікатність</div>
<svg class="a" style="left:1267.3px;top:228.8px;" width="6" height="5" viewBox="0 0 6 5"><polyline points="0.5,0.5 3.0,4 5.5,0.5" fill="none" stroke="#b3b1af" stroke-width="1.1"/></svg>
<div class="t" style="left:1240.0px;top:249.0px;font-size:11px;color:#5c5b5a;letter-spacing:-0.235px;">Делікатність</div>
<div class="a" style="left:1313.5px;top:173px;width:1px;height:85px;background:#c9c7c5;"></div>
<svg class="a" style="left:1340px;top:176px;" width="28" height="28" viewBox="0 0 28 28"><rect x="0.8" y="0.8" width="26.5" height="26.5" fill="#f9ddd3" stroke="#d2613f" stroke-width="1.4"/><rect x="3.5" y="3.5" width="9" height="9" fill="#fff" stroke="#d2613f" stroke-width="1.1"/><rect x="15.5" y="3.5" width="9" height="9" fill="#fff" stroke="#d2613f" stroke-width="1.1"/><rect x="3.5" y="15.5" width="9" height="9" fill="#fff" stroke="#d2613f" stroke-width="1.1"/><rect x="15.5" y="15.5" width="9" height="9" fill="#fff" stroke="#d2613f" stroke-width="1.1"/></svg>
<div class="t" style="left:1324.5px;top:210.5px;font-size:11px;color:#3b3a39;letter-spacing:0.256px;">Надбудови</div>
<div class="t" style="left:1326.8px;top:249.0px;font-size:11px;color:#5c5b5a;letter-spacing:-0.300px;">Надбудови</div>
<div class="a" style="left:1393.4px;top:173px;width:1px;height:85px;background:#c9c7c5;"></div>
<svg class="a" style="left:1421px;top:174px;" width="32" height="28" viewBox="0 0 32 28"><rect x="4" y="5" width="26.5" height="21.5" fill="#ebe9e8" stroke="#b3b1af" stroke-width="1.6"/><path d="M19,10 V26 M4,10 H30" stroke="#b3b1af" stroke-width="1.2"/><path d="M12,0.5 L3,12 H9 L5,21 L16,8 H10 Z" fill="#c8c6c4" stroke="#a6a4a2" stroke-width="0.8"/></svg>
<div class="t" style="left:1404.0px;top:210.5px;font-size:11px;color:#b3b1af;letter-spacing:0.480px;">Конструктор</div>
<div class="a" style="left:1482px;top:173px;width:1px;height:85px;background:#c9c7c5;"></div>
<svg class="a" style="left:1500.5px;top:253px;" width="10" height="6" viewBox="0 0 10 6"><polyline points="0.5,5.5 5,1 9.5,5.5" fill="none" stroke="#444" stroke-width="1.2"/></svg>
<div class="a" style="left:8px;top:262px;width:1511px;height:625px;background:#e6e6e6;"></div>
<div class="a" style="left:8px;top:262px;width:1511px;height:2px;background:linear-gradient(#d6d4d2,#e6e6e6);"></div>
<div class="a" style="left:218px;top:265px;width:17px;height:620px;background:#f0f0f0;"></div>
<div class="a" style="left:218px;top:265px;width:17px;height:15.5px;background:#fff;border:1px solid #bdbdbd;"></div>
<svg class="a" style="left:222px;top:269.5px;" width="9" height="5" viewBox="0 0 9 5"><path d="M0,5 L4.5,0 L9,5 Z" fill="#222"/></svg>
<div class="a" style="left:218px;top:281px;width:17px;height:330px;background:#fff;border:1px solid #bdbdbd;"></div>
<div class="a" style="left:218px;top:870px;width:17px;height:15.5px;background:#fff;border:1px solid #bdbdbd;"></div>
<svg class="a" style="left:222px;top:875.5px;" width="9" height="5" viewBox="0 0 9 5"><path d="M0,0 L4.5,5 L9,0 Z" fill="#222"/></svg>
<div class="a" style="left:235px;top:262px;width:1px;height:625px;background:#d8d8d8;"></div>
<div class="t" style="left:21.3px;top:280.7px;font-size:13px;color:#505050;">1</div>
<div class="t" style="left:21.3px;top:389.7px;font-size:13px;color:#505050;">2</div>
<div class="t" style="left:21.3px;top:498.7px;font-size:13px;color:#505050;">3</div>
<div class="t" style="left:21.3px;top:607.7px;font-size:13px;color:#505050;">4</div>
<div class="t" style="left:20.4px;top:716.7px;font-size:13px;color:#c43e1c;">5</div>
<div class="t" style="left:21.3px;top:825.7px;font-size:13px;color:#505050;">6</div>
<div class="a" style="left:43.5px;top:283px;width:154px;height:87px;background:#214045;"></div>
<svg class="a" style="left:43.5px;top:283px;" width="154" height="87" viewBox="0 0 154 87"><defs><clipPath id="c1"><rect width="154" height="87"/></clipPath></defs><g clip-path="url(#c1)" fill="none" stroke="#26494b" stroke-width="10"><circle cx="131" cy="71" r="13"/><circle cx="131" cy="71" r="33"/><circle cx="131" cy="71" r="53"/></g></svg>
<div class="a" style="left:43.5px;top:319.2px;width:154px;height:13.2px;background:#1f5758;"></div>
<svg class="a" style="left:87.5px;top:288.5px;" width="16" height="13" viewBox="0 0 16 13"><g fill="none" stroke="#f4f8f8" stroke-width="1.1"><path d="M8,1 Q15,1.5 15,6.5 Q15,12 8,12 Q1,12 1,6.5 Q1,2.5 5,2"/><path d="M8,3.5 Q12.5,4 12.5,7 Q12.5,10 8,10 Q4,10 4,7 Q4,5 6.5,4.8"/><path d="M8,6 Q10,6.2 10,7.3 Q10,8.5 8,8.5"/></g></svg>
<div class="t" style="left:107.0px;top:290.3px;font-size:7.5px;color:#f4f8f8;letter-spacing:3.432px;">ASTERS</div>
<div class="t" style="left:70.5px;top:321.7px;font-size:3.6px;color:#f0f4f4;font-weight:700;letter-spacing:0.655px;">КОНФІСКАЦІЯ ЗАМОРОЖЕНИХ АКТИВІВ ТА</div>
<div class="t" style="left:75.7px;top:327.7px;font-size:3.6px;color:#f0f4f4;font-weight:700;letter-spacing:0.620px;">РИЗИКИ, ПОВ’ЯЗАНІ З КОНФІСКАЦІЄЮ</div>
<div class="a" style="left:168.4px;top:363.3px;width:21px;height:1px;background:#8aa4a4;opacity:.7;"></div>
<div class="a" style="left:43.5px;top:392px;width:154px;height:87px;background:#fff;"></div>
<div class="a" style="left:43.5px;top:392px;width:154px;height:16px;background:#214045;"></div>
<div class="t" style="left:51.0px;top:395.8px;font-size:3.6px;color:#dfe6e6;font-weight:700;letter-spacing:0.596px;">ЗАХОДИ УКРАЇНСЬКОГО УРЯДУ ТА</div>
<div class="t" style="left:51.0px;top:400.5px;font-size:3.6px;color:#dfe6e6;font-weight:700;letter-spacing:0.648px;">РИЗИКИ МОЖЛИВОГО РЕАГУВАННЯ | ВСТУП</div>
<div class="a" style="left:43.5px;top:415px;width:83.5px;height:64px;background:#214045;"></div>
<div class="a" style="left:131px;top:418px;width:66.5px;height:57px;background:#214045;"></div>
<div class="a" style="left:56.9px;top:421.0px;width:66px;height:1.7px;background:#b8c6c6;opacity:.5;"></div>
<div class="a" style="left:56.9px;top:428.4px;width:58px;height:1.7px;background:#b8c6c6;opacity:.5;"></div>
<div class="a" style="left:56.9px;top:432.3px;width:54px;height:1.7px;background:#b8c6c6;opacity:.5;"></div>
<div class="a" style="left:56.9px;top:436.2px;width:58px;height:1.7px;background:#b8c6c6;opacity:.5;"></div>
<div class="a" style="left:56.9px;top:443.9px;width:62px;height:1.7px;background:#b8c6c6;opacity:.5;"></div>
<div class="a" style="left:56.9px;top:447.5px;width:13px;height:1.7px;background:#b8c6c6;opacity:.5;"></div>
<div class="a" style="left:56.9px;top:455.0px;width:64px;height:1.7px;background:#b8c6c6;opacity:.5;"></div>
<div class="a" style="left:56.9px;top:458.8px;width:56px;height:1.7px;background:#b8c6c6;opacity:.5;"></div>
<div class="a" style="left:56.9px;top:462.7px;width:57px;height:1.7px;background:#b8c6c6;opacity:.5;"></div>
<div class="a" style="left:52.0px;top:421.3px;width:1.5px;height:1.2px;background:#9fb0b0;"></div>
<div class="a" style="left:52.0px;top:428.7px;width:1.5px;height:1.2px;background:#9fb0b0;"></div>
<div class="a" style="left:52.0px;top:444.2px;width:1.5px;height:1.2px;background:#9fb0b0;"></div>
<div class="a" style="left:52.0px;top:455.3px;width:1.5px;height:1.2px;background:#9fb0b0;"></div>
<div class="a" style="left:139px;top:428.4px;width:46px;height:1.7px;background:#b8c6c6;opacity:.5;"></div>
<div class="a" style="left:139px;top:432.3px;width:50px;height:1.7px;background:#b8c6c6;opacity:.5;"></div>
<div class="a" style="left:139px;top:436.0px;width:38px;height:1.7px;background:#b8c6c6;opacity:.5;"></div>
<div class="a" style="left:143.4px;top:443.2px;width:11px;height:1.7px;background:#b8c6c6;opacity:.5;"></div>
<div class="a" style="left:143.4px;top:447.2px;width:23px;height:1.7px;background:#b8c6c6;opacity:.5;"></div>
<div class="a" style="left:143.4px;top:451.09999999999997px;width:48px;height:1.7px;background:#b8c6c6;opacity:.5;"></div>
<div class="a" style="left:143.4px;top:455.0px;width:37px;height:1.7px;background:#b8c6c6;opacity:.5;"></div>
<div class="a" style="left:143.4px;top:458.8px;width:26px;height:1.7px;background:#b8c6c6;opacity:.5;"></div>
<div class="a" style="left:143.4px;top:462.7px;width:46px;height:1.7px;background:#b8c6c6;opacity:.5;"></div>
<div class="a" style="left:143.4px;top:466.4px;width:9px;height:1.7px;background:#b8c6c6;opacity:.5;"></div>
<div class="a" style="left:139.6px;top:443.5px;width:1.3px;height:1.2px;background:#9fb0b0;"></div>
<div class="a" style="left:139.6px;top:447.5px;width:1.3px;height:1.2px;background:#9fb0b0;"></div>
<div class="a" style="left:139.6px;top:451.4px;width:1.3px;height:1.2px;background:#9fb0b0;"></div>
<div class="a" style="left:139.6px;top:463.0px;width:1.3px;height:1.2px;background:#9fb0b0;"></div>
<div class="a" style="left:43.5px;top:501px;width:154px;height:87px;background:#fff;"></div>
<div class="a" style="left:43.5px;top:501px;width:154px;height:14.6px;background:#214045;"></div>
<div class="t" style="left:51.0px;top:504.8px;font-size:3.6px;color:#dfe6e6;font-weight:700;letter-spacing:0.636px;">ЗАХОДИ УКРАЇНСЬКОГО УРЯДУ, СПРЯМОВАНІ НА</div>
<div class="t" style="left:51.0px;top:509.5px;font-size:3.6px;color:#dfe6e6;font-weight:700;letter-spacing:0.549px;">СТЯГНЕННЯ АКТИВІВ ВОРОГА</div>
<div class="a" style="left:43.5px;top:523.2px;width:83.3px;height:63.8px;background:#214045;"></div>
<div class="a" style="left:131.2px;top:526.4px;width:66.6px;height:57.6px;background:#214045;"></div>
<div class="a" style="left:52.4px;top:534.5px;width:66px;height:2.2px;background:#c8d4d4;opacity:0.55;"></div>
<div class="a" style="left:52.4px;top:540.1px;width:67.6px;height:2.2px;background:#c8d4d4;opacity:0.55;"></div>
<div class="a" style="left:52.4px;top:545.6px;width:64px;height:2.2px;background:#c8d4d4;opacity:0.55;"></div>
<div class="a" style="left:52.4px;top:550.7px;width:31.8px;height:2.2px;background:#c8d4d4;opacity:0.55;"></div>
<div class="a" style="left:56.8px;top:560.9px;width:55px;height:2.2px;background:#c8d4d4;opacity:0.55;"></div>
<div class="a" style="left:56.8px;top:566.4px;width:23.5px;height:2.2px;background:#c8d4d4;opacity:0.55;"></div>
<div class="a" style="left:56.8px;top:571.7px;width:36px;height:2.2px;background:#c8d4d4;opacity:0.55;"></div>
<div class="a" style="left:52.5px;top:561.3px;width:1.4px;height:1.4px;background:#c0cccc;"></div>
<div class="a" style="left:52.5px;top:572.1px;width:1.4px;height:1.4px;background:#c0cccc;"></div>
<div class="a" style="left:139.0px;top:537.2px;width:54px;height:1.7px;background:#b8c6c6;opacity:.5;"></div>
<div class="a" style="left:139.0px;top:540.8000000000001px;width:9px;height:1.7px;background:#b8c6c6;opacity:.5;"></div>
<div class="a" style="left:143.39999999999998px;top:544.5px;width:45px;height:1.7px;background:#b8c6c6;opacity:.5;"></div>
<div class="a" style="left:143.39999999999998px;top:548.3000000000001px;width:7px;height:1.7px;background:#b8c6c6;opacity:.5;"></div>
<div class="a" style="left:143.39999999999998px;top:556.0px;width:40px;height:1.7px;background:#b8c6c6;opacity:.5;"></div>
<div class="a" style="left:143.39999999999998px;top:559.7px;width:50px;height:1.7px;background:#b8c6c6;opacity:.5;"></div>
<div class="a" style="left:143.39999999999998px;top:563.6px;width:42px;height:1.7px;background:#b8c6c6;opacity:.5;"></div>
<div class="a" style="left:143.39999999999998px;top:567.4px;width:47px;height:1.7px;background:#b8c6c6;opacity:.5;"></div>
<div class="a" style="left:143.39999999999998px;top:571.1px;width:40px;height:1.7px;background:#b8c6c6;opacity:.5;"></div>
<div class="a" style="left:143.39999999999998px;top:575.0px;width:25px;height:1.7px;background:#b8c6c6;opacity:.5;"></div>
<div class="a" style="left:139.7px;top:544.8px;width:1.2px;height:1.2px;background:#9fb0b0;"></div>
<div class="a" style="left:139.7px;top:556.3px;width:1.2px;height:1.2px;background:#9fb0b0;"></div>
<div class="a" style="left:43.5px;top:609.1px;width:154px;height:86px;background:#fff;"></div>
<div class="a" style="left:43.5px;top:609.1px;width:154px;height:15.5px;background:#214045;"></div>
<div class="t" style="left:51.0px;top:612.9px;font-size:3.6px;color:#dfe6e6;font-weight:700;letter-spacing:0.636px;">ЗАХОДИ УКРАЇНСЬКОГО УРЯДУ, СПРЯМОВАНІ НА</div>
<div class="t" style="left:51.0px;top:617.6px;font-size:3.6px;color:#dfe6e6;font-weight:700;letter-spacing:0.647px;">СТЯГНЕННЯ АКТИВІВ ВОРОГА | ЗА МЕЖАМИ УКРАЇНИ</div>
<div class="a" style="left:44px;top:630.5px;width:82.8px;height:64.2px;background:#214045;"></div>
<div class="a" style="left:131.4px;top:635.2px;width:66.4px;height:57.6px;background:#214045;"></div>
<div class="a" style="left:52.3px;top:652.2px;width:68.6px;height:1.7px;background:#c8d4d4;opacity:.5;"></div>
<div class="a" style="left:52.3px;top:657.4000000000001px;width:60.8px;height:1.7px;background:#c8d4d4;opacity:.5;"></div>
<div class="a" style="left:52.3px;top:662.8000000000001px;width:68.1px;height:1.7px;background:#c8d4d4;opacity:.5;"></div>
<svg class="a" style="left:151px;top:655px;" width="27" height="20" viewBox="0 0 27 20"><g fill="none" stroke="#e8eeee" stroke-width="0.9"><circle cx="13" cy="7.5" r="6.3"/><circle cx="13" cy="6" r="2.4"/><path d="M9.2,12 Q13,8.5 16.8,12"/><path d="M17.6,12 L22.5,18"/><path d="M6.5,2 Q3,3 3.5,7 M19.5,2 Q23,3 22.5,7 M1,13 Q1,9 5,9 M25,13 Q25,9 21,9 M7,16 L8,13"/></g></svg>
<div class="a" style="left:40px;top:714px;width:161.3px;height:94px;background:#7a1616;"></div>
<div class="a" style="left:42.5px;top:716.5px;width:156px;height:89px;background:#e9d0cc;"></div>
<div class="a" style="left:43.5px;top:717px;width:154px;height:87px;background:#fff;"></div>
<div class="a" style="left:43.5px;top:717px;width:154px;height:15.6px;background:#214045;"></div>
<div class="t" style="left:51.0px;top:719.6px;font-size:3.5px;color:#dfe6e6;font-weight:700;letter-spacing:0.686px;">ЗАХОДИ УКРАЇНСЬКОГО УРЯДУ, СПРЯМОВАНІ НА</div>
<div class="t" style="left:51.0px;top:724.4px;font-size:3.5px;color:#dfe6e6;font-weight:700;letter-spacing:0.748px;">ЗАХОПЛЕННЯ АКТИВІВ ПРОТИВНИКА | ЗА МЕЖАМИ</div>
<div class="t" style="left:51.0px;top:729.2px;font-size:3.5px;color:#dfe6e6;font-weight:700;letter-spacing:0.303px;">УКРАЇНИ</div>
<div class="a" style="left:43.5px;top:740.6px;width:154px;height:63.4px;background:#214045;"></div>
<svg class="a" style="left:43.5px;top:717px;" width="154" height="87" viewBox="0 0 154 87"><g fill="none" stroke="#b8caca" stroke-width="0.6"><rect x="13" y="31" width="130" height="52"/><path d="M78,31 V83 M13,35.8 H143 M13,41.5 H143 M13,51 H143 M13,66 H143"/></g></svg>
<div class="a" style="left:57.5px;top:754.7px;width:40px;height:1.7px;background:#e0e8e8;opacity:.5;"></div>
<div class="a" style="left:123.5px;top:754.7px;width:45px;height:1.7px;background:#e0e8e8;opacity:.5;"></div>
<div class="a" style="left:123.5px;top:758.2px;width:40px;height:1.7px;background:#e0e8e8;opacity:.5;"></div>
<div class="a" style="left:57.5px;top:760.2px;width:42px;height:1.7px;background:#e0e8e8;opacity:.5;"></div>
<div class="a" style="left:57.5px;top:763.7px;width:12px;height:1.7px;background:#e0e8e8;opacity:.5;"></div>
<div class="a" style="left:57.5px;top:769.7px;width:48px;height:1.7px;background:#e0e8e8;opacity:.5;"></div>
<div class="a" style="left:123.5px;top:769.7px;width:48px;height:1.7px;background:#e0e8e8;opacity:.5;"></div>
<div class="a" style="left:57.5px;top:773.2px;width:15px;height:1.7px;background:#e0e8e8;opacity:.5;"></div>
<div class="a" style="left:123.5px;top:773.2px;width:42px;height:1.7px;background:#e0e8e8;opacity:.5;"></div>
<div class="a" style="left:123.5px;top:776.7px;width:18px;height:1.7px;background:#e0e8e8;opacity:.5;"></div>
<div class="a" style="left:57.5px;top:784.7px;width:40px;height:1.7px;background:#e0e8e8;opacity:.5;"></div>
<div class="a" style="left:123.5px;top:784.7px;width:46px;height:1.7px;background:#e0e8e8;opacity:.5;"></div>
<div class="a" style="left:57.5px;top:788.2px;width:36px;height:1.7px;background:#e0e8e8;opacity:.5;"></div>
<div class="a" style="left:123.5px;top:788.2px;width:40px;height:1.7px;background:#e0e8e8;opacity:.5;"></div>
<div class="a" style="left:57.5px;top:791.7px;width:45px;height:1.7px;background:#e0e8e8;opacity:.5;"></div>
<div class="a" style="left:123.5px;top:791.7px;width:20px;height:1.7px;background:#e0e8e8;opacity:.5;"></div>
<div class="a" style="left:43.5px;top:826px;width:154px;height:60px;background:#fff;"></div>
<div class="a" style="left:43.5px;top:826px;width:154px;height:15.6px;background:#214045;"></div>
<div class="t" style="left:51.0px;top:832.5px;font-size:3.6px;color:#dfe6e6;font-weight:700;letter-spacing:0.437px;">РЕАКЦІЯ РОСІЇ НА КОНТРЗАХОДИ УКРАЇНИ</div>
<div class="a" style="left:43.5px;top:849.5px;width:154px;height:37px;background:#214045;"></div>
<div class="a" style="left:51.5px;top:863.2px;width:110px;height:1.7px;background:#b0c0c0;opacity:.5;"></div>
<div class="a" style="left:51.5px;top:867.2px;width:66px;height:1.7px;background:#b0c0c0;opacity:.5;"></div>
<div class="a" style="left:51.5px;top:874.2px;width:120px;height:1.7px;background:#b0c0c0;opacity:.5;"></div>
<div class="a" style="left:51.5px;top:878.2px;width:120px;height:1.7px;background:#b0c0c0;opacity:.5;"></div>
<div class="a" style="left:361px;top:273.5px;width:1018px;height:572px;background:#214045;"></div>
<div class="a" style="left:361px;top:377.5px;width:1018px;height:45.5px;background:#fdfdfd;"></div>
<div class="t" style="left:411.2px;top:281.3px;font-size:26px;color:#f4f7f7;font-weight:700;letter-spacing:2.722px;">ЗАХОДИ УКРАЇНСЬКОГО УРЯДУ, СПРЯМОВАНІ НА</div>
<div class="t" style="left:411.2px;top:313.1px;font-size:26px;color:#f4f7f7;font-weight:700;letter-spacing:2.913px;">ЗАХОПЛЕННЯ АКТИВІВ ПРОТИВНИКА | ЗА МЕЖАМИ</div>
<div class="t" style="left:411.2px;top:345.3px;font-size:26px;color:#f4f7f7;font-weight:700;letter-spacing:2.926px;">УКРАЇНИ</div>
<div class="a" style="left:448px;top:475px;width:862px;height:1.8px;background:#dfe6e6;"></div>
<div class="a" style="left:448px;top:475px;width:1.5px;height:345.5px;background:#dfe6e6;"></div>
<div class="a" style="left:1308.5px;top:475px;width:1.5px;height:345.5px;background:#dfe6e6;"></div>
<div class="a" style="left:877.8px;top:475px;width:1.5px;height:345.5px;background:#dfe6e6;"></div>
<div class="a" style="left:448px;top:506px;width:862px;height:3.6px;background:#dfe6e6;"></div>
<div class="a" style="left:448px;top:571px;width:862px;height:1.5px;background:#dfe6e6;"></div>
<div class="a" style="left:448px;top:636.5px;width:862px;height:1.5px;background:#dfe6e6;"></div>
<div class="a" style="left:448px;top:728px;width:862px;height:1.5px;background:#dfe6e6;"></div>
<div class="a" style="left:448px;top:819px;width:862px;height:1.5px;background:#dfe6e6;"></div>
<div class="t" style="left:537.8px;top:478.0px;font-size:19.5px;color:#f6f8f8;font-weight:700;letter-spacing:-1.043px;">ЗАХОДИ, ЯКІ ВЖИВАЮТЬСЯ</div>
<div class="t" style="left:1068.5px;top:478.0px;font-size:19.5px;color:#f6f8f8;font-weight:700;letter-spacing:-1.320px;">ОПИС</div>
<div class="t" style="left:454.8px;top:511.0px;font-size:23px;color:#f6f8f8;font-weight:700;letter-spacing:-0.750px;">політичні зусилля</div>
<div class="t" style="left:454.8px;top:576.0px;font-size:23px;color:#f6f8f8;font-weight:700;letter-spacing:-0.350px;">постійний обмін інформацією щодо</div>
<div class="t" style="left:454.8px;top:606.2px;font-size:23px;color:#f6f8f8;font-weight:700;letter-spacing:-0.277px;">санкцій</div>
<div class="t" style="left:454.8px;top:641.0px;font-size:23px;color:#f6f8f8;font-weight:700;letter-spacing:-0.567px;">укладання двосторонніх угод у сфері</div>
<div class="t" style="left:454.8px;top:671.2px;font-size:23px;color:#f6f8f8;font-weight:700;letter-spacing:-0.252px;">безпеки</div>
<div class="t" style="left:454.8px;top:732.2px;font-size:23px;color:#f6f8f8;font-weight:700;letter-spacing:-0.438px;">вжиття заходів щодо звернення</div>
<div class="t" style="left:454.8px;top:762.4px;font-size:23px;color:#f6f8f8;font-weight:700;letter-spacing:-0.556px;">стягнення на активи росії у</div>
<div class="t" style="left:454.8px;top:792.6px;font-size:23px;color:#f6f8f8;font-weight:700;letter-spacing:-0.366px;">звичайному судовому порядку</div>
<div class="a" style="left:683px;top:789.5px;width:48px;height:1.2px;background:#c05050;opacity:.7"></div>
<div class="t" style="left:885.5px;top:511.0px;font-size:23px;color:#f6f8f8;letter-spacing:0.282px;">передати заморожені активи до</div>
<div class="t" style="left:885.5px;top:541.2px;font-size:23px;color:#f6f8f8;letter-spacing:0.235px;">Компенсаційного фонду</div>
<div class="t" style="left:885.5px;top:641.0px;font-size:23px;color:#f6f8f8;letter-spacing:0.198px;">містять положення про притягнення</div>
<div class="t" style="left:885.5px;top:671.2px;font-size:23px;color:#f6f8f8;letter-spacing:0.197px;">до відповідальності держави-</div>
<div class="t" style="left:885.5px;top:701.4px;font-size:23px;color:#f6f8f8;letter-spacing:-0.050px;">агресора</div>
<div class="t" style="left:885.5px;top:732.2px;font-size:23px;color:#f6f8f8;letter-spacing:0.058px;">Наприклад, рішення Нафтогазу проти</div>
<div class="t" style="left:885.5px;top:762.4px;font-size:23px;color:#f6f8f8;letter-spacing:-0.272px;">Росії, яке виконується в США та</div>
<div class="t" style="left:885.5px;top:792.6px;font-size:23px;color:#f6f8f8;letter-spacing:0.212px;">Великобританії</div>
<div class="a" style="left:1502.2px;top:262px;width:16.8px;height:521px;background:#f2f2f2;"></div>
<div class="a" style="left:1502.2px;top:265px;width:16.4px;height:15.5px;background:#fff;border:1px solid #bdbdbd;"></div>
<svg class="a" style="left:1506px;top:270px;" width="9" height="5" viewBox="0 0 9 5"><path d="M0,5 L4.5,0 L9,5 Z" fill="#222"/></svg>
<div class="a" style="left:1502.2px;top:482px;width:16.4px;height:49.6px;background:#fff;border:1px solid #bdbdbd;"></div>
<div class="a" style="left:1502.2px;top:783.4px;width:16.4px;height:16px;background:#fff;border:1px solid #bdbdbd;"></div>
<svg class="a" style="left:1506px;top:789px;" width="9" height="5" viewBox="0 0 9 5"><path d="M0,0 L4.5,5 L9,0 Z" fill="#111"/></svg>
<svg class="a" style="left:1505.5px;top:802px;" width="10" height="30" viewBox="0 0 10 30"><g fill="#6a6a6a"><path d="M0,6 L5,0 L10,6 Z M0,12 L5,6 L10,12 Z"/><path d="M0,17 L10,17 L5,23 Z M0,24 L10,24 L5,30 Z"/></g></svg>
<div class="a" style="left:236px;top:851.5px;width:1283px;height:1px;background:#d2d0ce;"></div>
<div class="t" style="left:247.2px;top:859.2px;font-size:14.5px;color:#5a5a5a;letter-spacing:-0.236px;">Нотатки до слайда</div>
<div class="a" style="left:8px;top:887px;width:1511px;height:21px;background:#f3f2f1;"></div>
<div class="t" style="left:19.0px;top:892.6px;font-size:11px;color:#505050;letter-spacing:-0.426px;">Слайд 5 з 10</div>
<div class="t" style="left:110.0px;top:892.6px;font-size:11px;color:#505050;letter-spacing:-0.258px;">українська</div>
<svg class="a" style="left:176.5px;top:890.5px;" width="15" height="15" viewBox="0 0 15 15"><g fill="none" stroke="#555" stroke-width="1"><circle cx="6" cy="2.3" r="1.8"/><path d="M0.8,5 Q6,7.5 11.2,5 M6,6.5 V9 L2.5,14 M6,9 L8.5,12.5"/><path d="M9,10 L14,14.5 M14,10 L9,14.5"/></g></svg>
<div class="t" style="left:194.3px;top:892.6px;font-size:11px;color:#505050;letter-spacing:-0.248px;">Спеціальні можливості: щось не так</div>
<svg class="a" style="left:1095px;top:890px;" width="18" height="16" viewBox="0 0 18 16"><g fill="none" stroke="#555" stroke-width="1"><path d="M0,7.5 H18 M0,10.5 H18 M0,13.5 H18"/><polyline points="5.5,4 9,1 12.5,4"/></g></svg>
<div class="t" style="left:1113.5px;top:892.0px;font-size:11px;color:#505050;letter-spacing:-0.230px;">Нотатки</div>
<div class="a" style="left:1170px;top:887px;width:39px;height:21px;background:#d9d7d5;"></div>
<svg class="a" style="left:1182px;top:891px;" width="15" height="13" viewBox="0 0 15 13"><g fill="none" stroke="#505050" stroke-width="1.1"><rect x="0.6" y="0.6" width="13.8" height="11.8"/><rect x="4" y="3" width="8" height="5.5"/><path d="M2.2,2 V11"/></g></svg>
<svg class="a" style="left:1221.5px;top:891px;" width="15" height="13" viewBox="0 0 15 13"><g fill="none" stroke="#505050" stroke-width="1.1"><rect x="0.6" y="0.6" width="5.5" height="4.8"/><rect x="8.6" y="0.6" width="5.5" height="4.8"/><rect x="0.6" y="7.6" width="5.5" height="4.8"/><rect x="8.6" y="7.6" width="5.5" height="4.8"/></g></svg>
<svg class="a" style="left:1260px;top:890.5px;" width="15" height="14" viewBox="0 0 15 14"><g fill="none" stroke="#505050" stroke-width="1.1"><path d="M0.6,1 H6.5 L7.5,2 L8.5,1 H14.4 V12.5 H8.5 L7.5,13.5 L6.5,12.5 H0.6 Z M7.5,2 V13"/><path d="M2.5,4 H5.5 M2.5,6.5 H5.5 M2.5,9 H5.5 M9.5,4 H12.5 M9.5,6.5 H12.5 M9.5,9 H12.5" stroke-width="0.8"/></g></svg>
<svg class="a" style="left:1299px;top:890.5px;" width="14" height="15" viewBox="0 0 14 15"><g fill="none" stroke="#505050" stroke-width="1.1"><rect x="0.6" y="0.6" width="12.8" height="8.5"/><path d="M4,3 H10 M7,9 V14 M3.5,14.4 H10.5"/></g></svg>
<div class="a" style="left:1333px;top:897.2px;width:7px;height:1px;background:#777;"></div>
<div class="a" style="left:1346px;top:897px;width:98px;height:1.5px;background:#8a8a8a;"></div>
<div class="a" style="left:1382px;top:893px;width:4.5px;height:10px;background:#505050;"></div>
<div class="a" style="left:1394.5px;top:894px;width:1px;height:7px;background:#707070;"></div>
<svg class="a" style="left:1447px;top:892px;" width="10" height="10" viewBox="0 0 10 10"><path d="M5,0.5 V9.5 M0.5,5 H9.5" stroke="#777" stroke-width="1"/></svg>
<div class="t" style="left:1466.3px;top:892.0px;font-size:11px;color:#505050;letter-spacing:-0.172px;">81%</div>
<svg class="a" style="left:1499px;top:890px;" width="15" height="15" viewBox="0 0 15 15"><g fill="none" stroke="#505050" stroke-width="1"><rect x="4" y="4" width="7" height="7"/><path d="M7.5,0.5 L5.5,2.5 M7.5,0.5 L9.5,2.5 M7.5,14.5 L5.5,12.5 M7.5,14.5 L9.5,12.5 M0.5,7.5 L2.5,5.5 M0.5,7.5 L2.5,9.5 M14.5,7.5 L12.5,5.5 M14.5,7.5 L12.5,9.5"/></g></svg>
<div class="a" style="left:1524.5px;top:525.5px;width:2px;height:33.5px;background:#8a8a8a;"></div>
<div class="a" style="left:1528.5px;top:525.5px;width:2px;height:33.5px;background:#8a8a8a;"></div>
<div class="a" style="left:1627px;top:114.6px;width:200px;height:787.6px;background:#222;border-radius:9px;overflow:hidden;"></div>
<svg class="a" style="left:1627px;top:114.6px;clip-path:inset(0 round 9px 9px 0 0);" width="200" height="111.9" viewBox="0 0 200 111.9" preserveAspectRatio="none"><defs><filter id="b0" x="-20%" y="-20%" width="140%" height="140%"><feGaussianBlur stdDeviation="4"/></filter><filter id="s0" x="-20%" y="-20%" width="140%" height="140%"><feGaussianBlur stdDeviation="1.2"/></filter><clipPath id="k0"><rect width="200" height="111.9"/></clipPath></defs><g clip-path="url(#k0)">
<rect width="200" height="112" fill="#a6a7a3"/>
<g filter="url(#b0)">
<rect x="-10" y="-10" width="32" height="130" fill="#cfd1cd"/>
<rect x="22" y="-10" width="80" height="35" fill="#c4c6c2"/>
<rect x="24" y="25" width="24" height="32" fill="#8f908c"/>
<rect x="52" y="30" width="24" height="26" fill="#999a96"/>
<rect x="105" y="-10" width="105" height="40" fill="#b2b3af"/>
<ellipse cx="175" cy="78" rx="24" ry="26" fill="#62625e"/>
<ellipse cx="62" cy="84" rx="26" ry="14" fill="#6e6e6a"/>
<rect x="-10" y="80" width="40" height="40" fill="#bcbdb9"/>
</g>
<g filter="url(#s0)">
<path d="M56,113 Q60,90 84,85 L132,85 Q156,90 160,113 Z" fill="#98a6c2"/>
<path d="M98,96 L116,96 L114,113 L100,113 Z" fill="#3a3e4a"/>
<path d="M94,76 L120,76 L123,90 L91,90 Z" fill="#c9a898"/>
<ellipse cx="107" cy="50" rx="25" ry="33" fill="#dbbfae"/>
<path d="M77,54 Q72,14 104,11 Q136,10 138,50 L133,44 Q130,26 106,22 Q84,24 81,44 Z" fill="#d2d2d0"/>
<rect x="82" y="47.5" width="26" height="16" rx="3" fill="none" stroke="#221c1a" stroke-width="2.4"/>
<rect x="110" y="47.5" width="22" height="16" rx="3" fill="none" stroke="#221c1a" stroke-width="2.4"/>
<path d="M101,80 Q107,81 113,80" stroke="#9a6a5a" stroke-width="1.3" fill="none"/>
<path d="M104,65 Q107,70 110,65" stroke="#b08878" stroke-width="1.2" fill="none"/>
</g></g></svg>
<svg class="a" style="left:1627px;top:226.5px;" width="200" height="113.0" viewBox="0 0 200 113.0" preserveAspectRatio="none"><defs><filter id="b1" x="-20%" y="-20%" width="140%" height="140%"><feGaussianBlur stdDeviation="4"/></filter><filter id="s1" x="-20%" y="-20%" width="140%" height="140%"><feGaussianBlur stdDeviation="1.2"/></filter><clipPath id="k1"><rect width="200" height="113.0"/></clipPath></defs><g clip-path="url(#k1)">
<rect width="200" height="113" fill="#aeb6b6"/>
<g filter="url(#b1)">
<rect x="-10" y="-10" width="75" height="45" fill="#e6ecf0"/>
<rect x="55" y="-10" width="90" height="50" fill="#c6cac8"/>
<ellipse cx="14" cy="52" rx="26" ry="26" fill="#3f6d92"/>
<rect x="-10" y="78" width="60" height="40" fill="#8b9a9c"/>
<rect x="40" y="35" width="35" height="80" fill="#aab0b0"/>
<rect x="140" y="-10" width="70" height="40" fill="#b2bebc"/>
<ellipse cx="160" cy="50" rx="22" ry="22" fill="#6c7c78"/>
<ellipse cx="178" cy="88" rx="26" ry="30" fill="#3a4a45"/>
<ellipse cx="150" cy="100" rx="14" ry="18" fill="#5d6e6a"/>
</g>
<g filter="url(#s1)">
<path d="M56,113 Q58,86 76,80 L122,80 Q142,86 146,113 Z" fill="#6a4a30"/>
<path d="M74,100 Q70,40 80,26 Q98,12 118,24 Q130,40 128,100 Z" fill="#2a201c"/>
<ellipse cx="99" cy="54" rx="19" ry="27" fill="#d9b2a3"/>
<path d="M80,48 H97 V58 H82 Z M101,48 H117 V58 H103 Z" fill="none" stroke="#4a4040" stroke-width="1.5"/>
<path d="M93,71 Q99,73 105,71" stroke="#b02a38" stroke-width="2.6" fill="none"/><path d="M85,53 H93 M105,53 H113" stroke="#5a4444" stroke-width="1.3"/>
</g></g></svg>
<svg class="a" style="left:1627px;top:339.5px;" width="200" height="112.5" viewBox="0 0 200 112.5" preserveAspectRatio="none"><defs><filter id="b2" x="-20%" y="-20%" width="140%" height="140%"><feGaussianBlur stdDeviation="4"/></filter><filter id="s2" x="-20%" y="-20%" width="140%" height="140%"><feGaussianBlur stdDeviation="1.2"/></filter><clipPath id="k2"><rect width="200" height="112.5"/></clipPath></defs><g clip-path="url(#k2)">
<rect width="200" height="112.5" fill="#222"/>
<svg x="24" y="0" width="151" height="112.5" viewBox="0 0 151 112.5">
<g filter="url(#s2)">
<rect width="151" height="112.5" fill="#e2e4da"/>
<path d="M0,0 H60 L55,45 L0,28 Z" fill="#e6e4cc"/>
<path d="M26,0 H62 L56,40 L22,34 Z" fill="#a9ada3"/>
<path d="M26,11 L60,13" stroke="#e4e6dc" stroke-width="2"/>
<path d="M62,0 H151 V26 L100,44 L56,42 Z" fill="#ebe4c2"/>
<path d="M0,28 L151,80 V112.5 H0 Z" fill="#e0e4da" opacity=".6"/>
<path d="M102,38 L128,36 L134,58 L108,60 Z" fill="#a8ada2"/>
<path d="M111,60 L146,56 L150,76 L114,78 Z" fill="#b2b6aa"/>
<path d="M82,68 L110,66 L112,85 L84,86 Z" fill="#b8bcb0"/>
<path d="M117,82 L151,78 V98 L120,100 Z" fill="#c4c6b8"/>
<path d="M128,26 L151,20 V50 L136,54 Z" fill="#d6d8cc"/>
<path d="M0,28 L151,80" stroke="#c8ccc0" stroke-width="1.5"/>
<path d="M40,0 L30,112 M85,40 L75,112" stroke="#d2d4c8" stroke-width="1"/>
<path d="M120,98 L151,95 V112.5 H118 Z" fill="#e2dcc0"/>
<circle cx="57" cy="67" r="2.2" fill="#8a8a80"/>
<ellipse cx="37" cy="94" rx="20" ry="26" fill="#b28e7c"/>
<path d="M16,92 Q14,64 37,63 Q58,64 58,88 Q52,76 37,76 Q22,76 16,92 Z" fill="#37332f"/>
<path d="M22,86 L52,84" stroke="#2a2420" stroke-width="1.4"/>
<path d="M18,112.5 Q26,102 46,100 L66,112.5 Z" fill="#5a4a44"/>
</g></svg></g></svg>
<svg class="a" style="left:1627px;top:452px;" width="200" height="112.5" viewBox="0 0 200 112.5" preserveAspectRatio="none"><defs><filter id="b3" x="-20%" y="-20%" width="140%" height="140%"><feGaussianBlur stdDeviation="4"/></filter><filter id="s3" x="-20%" y="-20%" width="140%" height="140%"><feGaussianBlur stdDeviation="1.2"/></filter><clipPath id="k3"><rect width="200" height="112.5"/></clipPath></defs><g clip-path="url(#k3)">
<rect width="200" height="112.5" fill="#ae3b2c"/>
<g filter="url(#s3)">
<rect x="55" y="0" width="145" height="112.5" fill="#b23c2e"/>
<rect x="160" y="0" width="40" height="112.5" fill="#a8382a"/>
<rect x="0" y="0" width="43" height="112.5" fill="#2a2320"/>
<g stroke-width="1.8">
<path d="M3,0 V11 M7,0 V11 M11,0 V11 M15,0 V11 M19,0 V11 M23,0 V11 M27,0 V11 M31,0 V11 M35,0 V11 M39,0 V11" stroke="#e6e6ea"/>
<path d="M3,16 V32 M7,16 V32 M11,16 V32 M15,16 V32 M19,16 V32 M23,16 V32 M27,16 V32 M31,16 V32 M35,16 V32 M39,16 V32" stroke="#dedee2"/>
</g>
<rect x="0" y="12" width="43" height="3" fill="#5a4a40"/>
<rect x="0" y="33" width="43" height="3" fill="#5a4a40"/>
<rect x="9" y="40" width="33" height="8" fill="#d6ccb4"/>
<rect x="0" y="50" width="6" height="20" fill="#e8e8ec"/>
<rect x="43" y="0" width="12" height="85" fill="#dcc9a2"/>
<rect x="56" y="52" width="20" height="24" fill="#e4e4e6"/>
<rect x="118" y="0" width="12" height="6" fill="#f0ece8"/>
<path d="M48,112.5 Q50,78 80,68 L128,66 Q155,75 162,112.5 Z" fill="#3e9c6a"/>
<rect x="130" y="70" width="20" height="15" fill="#2a2a30"/>
<rect x="0" y="90" width="45" height="23" fill="#6a5040"/>
<ellipse cx="107" cy="58" rx="21" ry="25" fill="#d2a48f"/>
<ellipse cx="126" cy="60" rx="5" ry="8" fill="#c89882"/>
<path d="M87,50 Q84,18 110,17 Q138,18 137,50 Q128,36 116,38 Q100,34 87,50 Z" fill="#3b2b24"/>
<ellipse cx="124" cy="63" rx="2" ry="3" fill="#f4f4f4"/><path d="M93,52 Q98,49 103,51 M108,51 Q113,49 117,52" stroke="#4a3028" stroke-width="1.6" fill="none"/><path d="M95,56 H101 M109,56 H115" stroke="#5a3a30" stroke-width="1.4"/><path d="M101,72 Q106,74 111,72" stroke="#a06858" stroke-width="1.3" fill="none"/>
</g></g></svg>
<svg class="a" style="left:1627px;top:564.5px;" width="200" height="112.5" viewBox="0 0 200 112.5" preserveAspectRatio="none"><defs><filter id="b4" x="-20%" y="-20%" width="140%" height="140%"><feGaussianBlur stdDeviation="4"/></filter><filter id="s4" x="-20%" y="-20%" width="140%" height="140%"><feGaussianBlur stdDeviation="1.2"/></filter><clipPath id="k4"><rect width="200" height="112.5"/></clipPath></defs><g clip-path="url(#k4)">
<rect width="200" height="112.5" fill="#c6c0b6"/>
<g filter="url(#b4)">
<rect x="-10" y="-10" width="220" height="40" fill="#cdc9c0"/>
<rect x="-10" y="60" width="70" height="60" fill="#bdb5aa"/>
<rect x="160" y="40" width="50" height="80" fill="#c4bdb2"/>
</g>
<g filter="url(#s4)">
<path d="M55,112.5 Q58,75 85,68 L130,68 Q160,75 168,112.5 Z" fill="#8795cc"/>
<path d="M95,78 L122,78 L120,112.5 L98,112.5 Z" fill="#2e3350"/>
<path d="M90,70 L106,84 L124,70 Z" fill="#a6b2dc"/>
<rect x="140" y="106" width="30" height="6" fill="#e4e0dc"/>
<ellipse cx="106" cy="48" rx="21" ry="30" fill="#c7988a"/>
<path d="M85,42 Q84,17 106,16 Q130,17 129,44 Q124,28 106,28 Q90,28 85,42 Z" fill="#4a423e"/><path d="M92,44 Q97,42 102,44 M110,44 Q115,42 120,44" stroke="#5a4038" stroke-width="1.5" fill="none"/><path d="M94,49 H101 M111,49 H118" stroke="#6a4a40" stroke-width="1.4"/><path d="M100,66 Q106,68 112,66" stroke="#9a6050" stroke-width="1.3" fill="none"/>
</g></g></svg>
<svg class="a" style="left:1627px;top:677px;" width="200" height="112.5" viewBox="0 0 200 112.5" preserveAspectRatio="none"><defs><filter id="b5" x="-20%" y="-20%" width="140%" height="140%"><feGaussianBlur stdDeviation="4"/></filter><filter id="s5" x="-20%" y="-20%" width="140%" height="140%"><feGaussianBlur stdDeviation="1.2"/></filter><clipPath id="k5"><rect width="200" height="112.5"/></clipPath></defs><g clip-path="url(#k5)">
<rect width="200" height="112.5" fill="#b3a59e"/>
<g filter="url(#b5)">
<rect x="-10" y="-10" width="38" height="130" fill="#ebe8e4"/>
<rect x="28" y="-10" width="30" height="130" fill="#c6bcb6"/>
<rect x="150" y="-10" width="60" height="130" fill="#a89c95"/>
</g>
<g filter="url(#s5)">
<path d="M60,112.5 Q70,88 96,84 L142,84 Q176,90 186,112.5 Z" fill="#e6e4ee"/>
<ellipse cx="106" cy="52" rx="25" ry="32" fill="#d6ac9e"/>
<path d="M80,46 Q76,14 104,12 Q132,14 133,48 Q126,30 106,28 Q86,30 80,46 Z" fill="#7a5540"/>
<ellipse cx="106" cy="8" rx="10" ry="7" fill="#6a4a38"/><path d="M90,44 Q96,41 102,43 M110,43 Q116,41 122,44" stroke="#6a4a3a" stroke-width="1.6" fill="none"/><path d="M92,49 H100 M112,49 H120" stroke="#5a4038" stroke-width="1.6"/>
<path d="M98,78 Q106,80 114,78" stroke="#b06868" stroke-width="1.6" fill="none"/>
</g></g></svg>
<svg class="a" style="left:1627px;top:789.5px;clip-path:inset(0 round 0 0 9px 9px);" width="200" height="112.7" viewBox="0 0 200 112.7" preserveAspectRatio="none"><defs><filter id="b6" x="-20%" y="-20%" width="140%" height="140%"><feGaussianBlur stdDeviation="4"/></filter><filter id="s6" x="-20%" y="-20%" width="140%" height="140%"><feGaussianBlur stdDeviation="1.2"/></filter><clipPath id="k6"><rect width="200" height="112.7"/></clipPath></defs><g clip-path="url(#k6)">
<rect width="200" height="112.7" fill="#222"/>
<svg x="68" y="0" width="64" height="112.7" viewBox="0 0 64 112.7">
<g filter="url(#s6)">
<rect width="64" height="112.7" fill="#e8e6e2"/>
<rect x="0" y="48" width="64" height="65" fill="#dad6ce"/>
<rect x="0" y="0" width="7" height="80" fill="#c9c7c3"/>
<rect x="42" y="15" width="20" height="17" fill="none" stroke="#c0bdb8" stroke-width="1"/>
<rect x="45" y="53" width="18" height="5" fill="#d8ccae"/>
<path d="M0,112.7 V70 Q2,62 22,62 L56,62 Q62,66 64,90 V112.7 Z" fill="#2a2828"/>
<path d="M0,112.7 Q2,82 22,76 L50,76 Q64,85 64,112.7 Z" fill="#c49aa0"/>
<ellipse cx="32" cy="60" rx="12" ry="15" fill="#c59780"/>
<path d="M20,54 Q20,42 32,42 Q45,42 44,55 Q38,48 32,49 Q24,49 20,54 Z" fill="#4e3e32"/>
<ellipse cx="33" cy="77" rx="11" ry="5" fill="#c9a08c"/>
</g></svg></g></svg>
<div class="a" style="left:1631px;top:200.5px;width:191px;height:24.5px;background:rgba(40,40,40,0.82);border-radius:7px;"></div>
<svg class="a" style="left:1634.5px;top:204.5px;" width="17" height="17" viewBox="0 0 17 17"><rect x="5.2" y="0.8" width="6.6" height="9" rx="3.3" fill="#e8525a"/><path d="M4,7.5 H13 Q13,14 8.5,14 Q4,14 4,7.5 Z" fill="#e8525a"/><rect x="6" y="14.3" width="5" height="1.3" fill="#d24a50"/><path d="M1,15.8 L16.3,0.8" stroke="#2a2222" stroke-width="2.8"/><path d="M1,15.8 L16.3,0.8" stroke="#ea6a70" stroke-width="1.3"/></svg>
<div class="t" style="left:1658.5px;top:205.1px;font-size:15px;color:#f4f4f4;letter-spacing:0.478px;">Volodymyr Ustymenko</div>
<div class="a" style="left:1631px;top:313px;width:127.7px;height:24.5px;background:rgba(40,40,40,0.82);border-radius:7px;"></div>
<svg class="a" style="left:1634.5px;top:317px;" width="17" height="17" viewBox="0 0 17 17"><rect x="5.2" y="0.8" width="6.6" height="9" rx="3.3" fill="#e8525a"/><path d="M4,7.5 H13 Q13,14 8.5,14 Q4,14 4,7.5 Z" fill="#e8525a"/><rect x="6" y="14.3" width="5" height="1.3" fill="#d24a50"/><path d="M1,15.8 L16.3,0.8" stroke="#2a2222" stroke-width="2.8"/><path d="M1,15.8 L16.3,0.8" stroke="#ea6a70" stroke-width="1.3"/></svg>
<div class="t" style="left:1658.5px;top:317.6px;font-size:15px;color:#f4f4f4;letter-spacing:-0.144px;">Алла Авсієвич</div>
<div class="a" style="left:1631px;top:425.5px;width:126px;height:24.5px;background:rgba(40,40,40,0.82);border-radius:7px;"></div>
<svg class="a" style="left:1634.5px;top:429.5px;" width="17" height="17" viewBox="0 0 17 17"><rect x="5.2" y="0.8" width="6.6" height="9" rx="3.3" fill="#e8525a"/><path d="M4,7.5 H13 Q13,14 8.5,14 Q4,14 4,7.5 Z" fill="#e8525a"/><rect x="6" y="14.3" width="5" height="1.3" fill="#d24a50"/><path d="M1,15.8 L16.3,0.8" stroke="#2a2222" stroke-width="2.8"/><path d="M1,15.8 L16.3,0.8" stroke="#ea6a70" stroke-width="1.3"/></svg>
<div class="t" style="left:1658.5px;top:430.1px;font-size:15px;color:#f4f4f4;letter-spacing:0.233px;">Oleksii Lavrin</div>
<div class="a" style="left:1631px;top:538px;width:158.5px;height:24.5px;background:rgba(40,40,40,0.82);border-radius:7px;"></div>
<svg class="a" style="left:1634.5px;top:542px;" width="17" height="17" viewBox="0 0 17 17"><rect x="5.2" y="0.8" width="6.6" height="9" rx="3.3" fill="#e8525a"/><path d="M4,7.5 H13 Q13,14 8.5,14 Q4,14 4,7.5 Z" fill="#e8525a"/><rect x="6" y="14.3" width="5" height="1.3" fill="#d24a50"/><path d="M1,15.8 L16.3,0.8" stroke="#2a2222" stroke-width="2.8"/><path d="M1,15.8 L16.3,0.8" stroke="#ea6a70" stroke-width="1.3"/></svg>
<div class="t" style="left:1658.5px;top:542.6px;font-size:15px;color:#f4f4f4;letter-spacing:0.230px;">Ivan Zhabotynskyi</div>
<div class="a" style="left:1631px;top:650.5px;width:106.5px;height:24.5px;background:rgba(40,40,40,0.82);border-radius:7px;"></div>
<svg class="a" style="left:1634.5px;top:654.5px;" width="17" height="17" viewBox="0 0 17 17"><rect x="5.2" y="0.8" width="6.6" height="9" rx="3.3" fill="#e8525a"/><path d="M4,7.5 H13 Q13,14 8.5,14 Q4,14 4,7.5 Z" fill="#e8525a"/><rect x="6" y="14.3" width="5" height="1.3" fill="#d24a50"/><path d="M1,15.8 L16.3,0.8" stroke="#2a2222" stroke-width="2.8"/><path d="M1,15.8 L16.3,0.8" stroke="#ea6a70" stroke-width="1.3"/></svg>
<div class="t" style="left:1658.5px;top:655.1px;font-size:15px;color:#f4f4f4;letter-spacing:0.290px;">Zoom user</div>
<div class="a" style="left:1631px;top:763px;width:129.7px;height:24.5px;background:rgba(40,40,40,0.82);border-radius:7px;"></div>
<svg class="a" style="left:1634.5px;top:767px;" width="17" height="17" viewBox="0 0 17 17"><rect x="5.2" y="0.8" width="6.6" height="9" rx="3.3" fill="#e8525a"/><path d="M4,7.5 H13 Q13,14 8.5,14 Q4,14 4,7.5 Z" fill="#e8525a"/><rect x="6" y="14.3" width="5" height="1.3" fill="#d24a50"/><path d="M1,15.8 L16.3,0.8" stroke="#2a2222" stroke-width="2.8"/><path d="M1,15.8 L16.3,0.8" stroke="#ea6a70" stroke-width="1.3"/></svg>
<div class="t" style="left:1658.5px;top:767.6px;font-size:15px;color:#f4f4f4;letter-spacing:-0.075px;">Юлія Бездоля</div>
<div class="a" style="left:1631px;top:876.3px;width:90.6px;height:24.5px;background:rgba(40,40,40,0.82);border-radius:7px;"></div>
<svg class="a" style="left:1634.5px;top:880.3px;" width="17" height="17" viewBox="0 0 17 17"><rect x="5.2" y="0.8" width="6.6" height="9" rx="3.3" fill="#e8525a"/><path d="M4,7.5 H13 Q13,14 8.5,14 Q4,14 4,7.5 Z" fill="#e8525a"/><rect x="6" y="14.3" width="5" height="1.3" fill="#d24a50"/><path d="M1,15.8 L16.3,0.8" stroke="#2a2222" stroke-width="2.8"/><path d="M1,15.8 L16.3,0.8" stroke="#ea6a70" stroke-width="1.3"/></svg>
<div class="t" style="left:1658.5px;top:880.9px;font-size:15px;color:#f4f4f4;letter-spacing:0.448px;">куцевол</div>
<div class="a" style="left:1680.5px;top:902px;width:92.5px;height:43px;background:#121212;border:1px solid #1a1a1a;border-top:none;"></div>
<svg class="a" style="left:1718px;top:918px;" width="16" height="9" viewBox="0 0 16 9"><polyline points="1,1 8,8 15,1" fill="none" stroke="#a0a0aa" stroke-width="2"/></svg>
<div class="a" style="left:0px;top:956px;width:1890px;height:5px;background:#050505;"></div>
<div class="a" style="left:838.5px;top:56.5px;width:243px;height:58px;background:rgba(8,8,8,0.86);border:1px solid #4a4a4a;border-radius:9px;"></div>
<div class="t" style="left:861.5px;top:78.0px;font-size:15.5px;color:#f2f2f2;">Oleksandr Frolov is talking...</div>
</body></html>
